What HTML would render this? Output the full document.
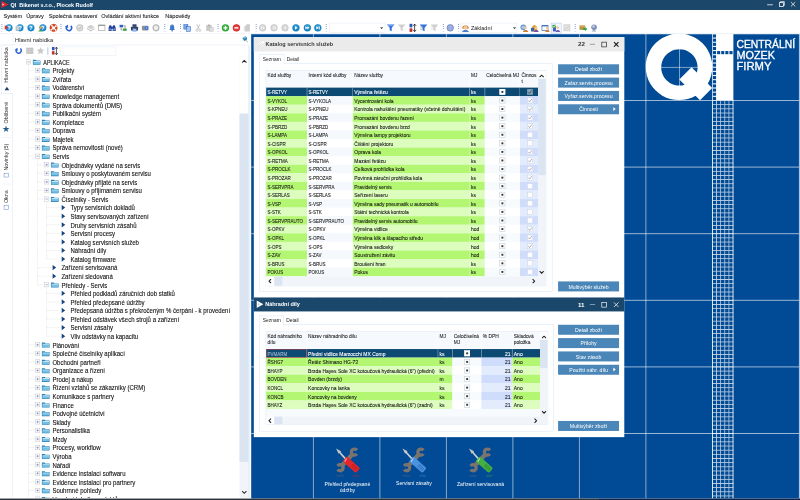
<!DOCTYPE html>
<html lang="cs"><head><meta charset="utf-8"><title>QI Bikenet s.r.o., Plocek Rudolf</title>
<style>
*{box-sizing:border-box;margin:0;padding:0}
html,body{width:800px;height:500px;overflow:hidden;background:#fff}
body{font-family:"Liberation Sans",sans-serif;color:#111}
#root{position:absolute;left:0;top:0;width:1680px;height:1050px;transform:scale(0.476190476);transform-origin:0 0;overflow:hidden;background:#fff;font-size:12px;filter:blur(.4px)}
.abs{position:absolute}
.t{position:absolute;white-space:nowrap;transform-origin:0 50%}
#titlebar{left:0;top:0;width:1680px;height:20.5px;background:#1b476a;z-index:2}
#titlebar .t{color:#fff;font-weight:bold;font-size:11.5px;line-height:20px}
#menubar{left:0;top:19px;width:1680px;height:26px;background:#fff}
#menubar .t{font-size:11.7px;line-height:28px;color:#1a1a1a;top:0;-webkit-text-stroke:.18px}
#toolbar{left:0;top:45px;width:1680px;height:26px;background:#fff;border-bottom:1px solid #d9e4f1}
#left{left:0;top:71px;width:527px;height:975px;background:#fff}
#mdi{left:527px;top:71px;width:1153px;height:975px;background:#014a95;overflow:hidden}
#status{left:0;top:1046.5px;width:1680px;height:4px;background:linear-gradient(90deg,#2b3138 0 1258px,#0b2148 1258px)}
.tree{font-size:13.6px;line-height:18px;color:#111;-webkit-text-stroke:.22px #111}
.win{position:absolute;background:#fff}
.btn{position:absolute;left:638px;width:128px;height:21px;background:#4a86b8;color:#fff;font-size:10.9px;line-height:22px;text-align:center;white-space:nowrap}
.cell{position:absolute;height:18px;overflow:hidden}
.g{-webkit-text-stroke:.2px;font-size:11.6px;line-height:18px;white-space:nowrap;position:absolute;left:3px;top:1px;transform-origin:0 50%;transform:scaleX(.9)}
.hdr{-webkit-text-stroke:.18px;position:absolute;font-size:11.6px;line-height:13px;color:#222;transform-origin:0 0;transform:scaleX(.875);white-space:nowrap}
</style></head>
<body><div id="root">
<div id="titlebar" class="abs">
<svg class="abs" style="left:2px;top:1px" width="17" height="17" viewBox="0 0 17 17"><path d="M1 1 L16 8.5 L1 16 Z" fill="#e3262b"/><path d="M3 6 l4 2.5 l-4 2.5z" fill="#fff" opacity=".8"/></svg>
<span class="t" style="left:22px;top:0px;white-space:pre">QI  Bikenet s.r.o., Plocek Rudolf</span>
<svg class="abs" style="left:1600px;top:0" width="80" height="19" viewBox="0 0 80 19"><g stroke="#fff" stroke-width="1.6" fill="none"><path d="M11 10h12"/><rect x="37" y="5.5" width="8" height="8"/><path d="M39 5.5v-2h8v8h-2"/><path d="M61 4.5l9 9M70 4.5l-9 9"/></g></svg>
</div>
<div id="menubar" class="abs">
<span class="t" style="left:7.4px;top:0px;">Systém</span>
<span class="t" style="left:55px;top:0px;">Úpravy</span>
<span class="t" style="left:102.4px;top:0px;">Společná nastavení</span>
<span class="t" style="left:212.6px;top:0px;">Ovládání aktivní funkce</span>
<span class="t" style="left:347px;top:0px;">Nápovědy</span>
</div>
<div id="toolbar" class="abs">
<div class="abs" style="left:3.0px;top:5px;width:2px;height:16px;background:repeating-linear-gradient(#7f9ccf 0 2px,#fff 2px 4px)"></div>
<svg class="abs" style="left:10.3px;top:5.4px" width="17" height="17" viewBox="0 0 16 16" overflow="visible"><circle cx="8.5" cy="8" r="7" fill="#1c86c8"/><circle cx="8.5" cy="6" r="4.6" fill="#55b4e6" opacity=".7"/><text x="8.5" y="12" font-size="10.5" font-weight="bold" fill="#fff" text-anchor="middle" font-family="Liberation Sans,sans-serif">?</text><path d="M0 3l7 4l-7 4.5z" fill="#e02b2b"/></svg>
<svg class="abs" style="left:33.4px;top:5.4px" width="17" height="17" viewBox="0 0 16 16" overflow="visible"><circle cx="8.5" cy="8" r="7" fill="#1c86c8"/><circle cx="8.5" cy="6" r="4.6" fill="#55b4e6" opacity=".7"/><text x="8.5" y="12" font-size="10.5" font-weight="bold" fill="#fff" text-anchor="middle" font-family="Liberation Sans,sans-serif">?</text><rect x="0" y="5" width="6" height="9" fill="#9aa3ad"/><rect x="1" y="4" width="6" height="9" fill="#c9d0d8"/></svg>
<svg class="abs" style="left:56.3px;top:5.4px" width="17" height="17" viewBox="0 0 16 16" overflow="visible"><circle cx="8.5" cy="8" r="7" fill="#1c86c8"/><circle cx="8.5" cy="6" r="4.6" fill="#55b4e6" opacity=".7"/><text x="8.5" y="12" font-size="10.5" font-weight="bold" fill="#fff" text-anchor="middle" font-family="Liberation Sans,sans-serif">?</text></svg>
<svg class="abs" style="left:80.6px;top:5.4px" width="17" height="17" viewBox="0 0 16 16" overflow="visible"><circle cx="8.5" cy="8" r="7" fill="#1c86c8"/><circle cx="8.5" cy="6" r="4.6" fill="#55b4e6" opacity=".7"/><text x="8.5" y="12" font-size="10.5" font-weight="bold" fill="#fff" text-anchor="middle" font-family="Liberation Sans,sans-serif">?</text><circle cx="3.5" cy="7.5" r="2.8" fill="#e8a25a"/><path d="M0 15c0-4 7-4 7 0z" fill="#4aa04a"/></svg>
<svg class="abs" style="left:103.9px;top:5.4px" width="17" height="17" viewBox="0 0 16 16" overflow="visible"><circle cx="8" cy="8" r="5.4" fill="none" stroke="#d9431f" stroke-width="4.2"/><circle cx="8" cy="8" r="5.4" fill="none" stroke="#fff" stroke-width="4.4" stroke-dasharray="2.8 5.68" stroke-dashoffset="-2.9"/><circle cx="8" cy="8" r="7.5" fill="none" stroke="#c23a1a" stroke-width=".6"/></svg>
<div class="abs" style="left:127.1px;top:5px;width:2px;height:16px;background:repeating-linear-gradient(#7f9ccf 0 2px,#fff 2px 4px)"></div>
<svg class="abs" style="left:135.8px;top:5.4px" width="17" height="17" viewBox="0 0 16 16" overflow="visible"><g transform="translate(8 8) scale(.88) translate(-8 -8)"><path d="M12.4 3.6A6 6 0 1 1 3 5.4" fill="none" stroke="#2a62d8" stroke-width="3.4"/><path d="M-.6 5.2l6.6-4.4l.6 7.4z" fill="#2a62d8"/></g></svg>
<svg class="abs" style="left:159.0px;top:5.4px" width="17" height="17" viewBox="0 0 16 16" overflow="visible"><circle cx="8" cy="8" r="7" fill="#c2c2c2"/><circle cx="8" cy="8" r="5" fill="#e4e4e4"/><path d="M5 8l2.2 2.4l4-4.6" fill="none" stroke="#b0b0b0" stroke-width="1.8"/></svg>
<svg class="abs" style="left:182.1px;top:5.4px" width="17" height="17" viewBox="0 0 16 16" overflow="visible"><path d="M8 2l7.5 4.5L8 11L.5 6.5z" fill="#cfcfcf"/><path d="M.5 8.5L8 13l7.5-4.5v2L8 15L.5 10.5z" fill="#b9b9b9"/></svg>
<svg class="abs" style="left:205.2px;top:5.4px" width="17" height="17" viewBox="0 0 16 16" overflow="visible"><rect x="1.5" y="2.5" width="13" height="11" fill="#fff" stroke="#a9a9a9" stroke-width="1.4"/><path d="M1.5 3h13" stroke="#8f8f8f" stroke-width="2"/></svg>
<svg class="abs" style="left:227.2px;top:5.4px" width="17" height="17" viewBox="0 0 16 16" overflow="visible"><path d="M1 14V8l2-5h3l1 3h2l1-3h3l2 5v6h-6v-4h-2v4z" fill="#1f3f9a"/><circle cx="4" cy="11" r="2" fill="#6f8fe0"/><circle cx="12" cy="11" r="2" fill="#6f8fe0"/></svg>
<svg class="abs" style="left:250.3px;top:5.4px" width="17" height="17" viewBox="0 0 16 16" overflow="visible"><rect x="1" y="2" width="7" height="5" fill="#2f5fc0"/><rect x="8" y="9" width="7" height="5" fill="#3f9f4f"/><path d="M4 8v4h3M12 8V4H9" fill="none" stroke="#555" stroke-width="1.2"/></svg>
<svg class="abs" style="left:274.2px;top:5.4px" width="17" height="17" viewBox="0 0 16 16" overflow="visible"><rect x="4" y="1" width="8" height="5" fill="#2a3d6e"/><rect x="1" y="6" width="14" height="7" rx="1" fill="#39425a"/><rect x="4" y="9" width="8" height="6" fill="#4d86e0"/><rect x="5" y="11" width="6" height="2" fill="#dfeaff"/></svg>
<svg class="abs" style="left:296.5px;top:5.4px" width="17" height="17" viewBox="0 0 16 16" overflow="visible"><rect x="1" y="4" width="13" height="9" rx="1.5" fill="#8d9199"/><circle cx="10" cy="8.5" r="3.6" fill="#2f6fe0"/><circle cx="10" cy="8.5" r="1.6" fill="#9cc2ff"/></svg>
<svg class="abs" style="left:319.4px;top:5.4px" width="17" height="17" viewBox="0 0 16 16" overflow="visible"><circle cx="8" cy="8" r="5.8" fill="#efefef" stroke="#b5b5b5" stroke-width="2.4"/></svg>
<div class="abs" style="left:345.1px;top:5px;width:2px;height:16px;background:repeating-linear-gradient(#7f9ccf 0 2px,#fff 2px 4px)"></div>
<svg class="abs" style="left:353.2px;top:5.4px" width="17" height="17" viewBox="0 0 16 16" overflow="visible"><path d="M8 1.5c3 0 4 2.5 4 5.5v3l1.6 2.2H2.4L4 10V7c0-3 1-5.5 4-5.5z" fill="#3f78c8"/><circle cx="8" cy="13.6" r="1.5" fill="#2a56a0"/><path d="M6 4c.5-1 1.5-1.5 2.5-1.5" stroke="#9cc2ff" stroke-width="1" fill="none"/></svg>
<div class="abs" style="left:377.6px;top:5px;width:2px;height:16px;background:repeating-linear-gradient(#7f9ccf 0 2px,#fff 2px 4px)"></div>
<svg class="abs" style="left:385.3px;top:5.4px" width="17" height="17" viewBox="0 0 16 16" overflow="visible"><rect x="1" y="1.5" width="8" height="9" fill="#7aa7e6" stroke="#2f5fc0" stroke-width="1"/><rect x="6.5" y="5.5" width="8" height="9.5" fill="#a9c8f4" stroke="#2f5fc0" stroke-width="1"/></svg>
<svg class="abs" style="left:407.8px;top:5.4px" width="17" height="17" viewBox="0 0 16 16" overflow="visible"><path d="M5 1l5 10M11 1L6 11" stroke="#b9b9b9" stroke-width="1.6"/><circle cx="5" cy="13" r="2" fill="none" stroke="#b9b9b9" stroke-width="1.4"/><circle cx="11" cy="13" r="2" fill="none" stroke="#b9b9b9" stroke-width="1.4"/></svg>
<svg class="abs" style="left:432.0px;top:5.4px" width="17" height="17" viewBox="0 0 16 16" overflow="visible"><rect x="1" y="3" width="11" height="11" fill="#c9c9c9"/><rect x="4" y="1.5" width="5" height="3" fill="#aaa"/><rect x="7" y="7" width="8" height="8" fill="#dedede" stroke="#bdbdbd" stroke-width=".8"/></svg>
<div class="abs" style="left:456.8px;top:5px;width:2px;height:16px;background:repeating-linear-gradient(#7f9ccf 0 2px,#fff 2px 4px)"></div>
<svg class="abs" style="left:465.1px;top:5.4px" width="17" height="17" viewBox="0 0 16 16" overflow="visible"><circle cx="8" cy="8" r="7.3" fill="#2aa332"/><circle cx="8" cy="8" r="6" fill="#3fc048" opacity=".6"/><path d="M4 8h8M8 4v8" stroke="#fff" stroke-width="2.6"/></svg>
<svg class="abs" style="left:487.6px;top:5.4px" width="17" height="17" viewBox="0 0 16 16" overflow="visible"><circle cx="8" cy="8" r="7.3" fill="#d4242a"/><circle cx="8" cy="8" r="6" fill="#ee4a4a" opacity=".6"/><path d="M4 8h8" stroke="#fff" stroke-width="2.8"/></svg>
<svg class="abs" style="left:510.7px;top:5.4px" width="17" height="17" viewBox="0 0 16 16" overflow="visible"><path d="M3 15V5l4-4h6v14z" fill="#cdcdcd"/><path d="M1 13V7l3-3v9z" fill="#dcdcdc"/></svg>
<div class="abs" style="left:537.0px;top:5px;width:2px;height:16px;background:repeating-linear-gradient(#7f9ccf 0 2px,#fff 2px 4px)"></div>
<svg class="abs" style="left:543.2px;top:5.4px" width="17" height="17" viewBox="0 0 16 16" overflow="visible"><circle cx="8" cy="8" r="7" fill="#c4c4c4"/><circle cx="8" cy="8" r="5.5" fill="#dadada"/><path d="M11 5L7.5 8L11 11zM5 5h1.6v6H5z" fill="#f4f4f4"/></svg>
<svg class="abs" style="left:566.6px;top:5.4px" width="17" height="17" viewBox="0 0 16 16" overflow="visible"><circle cx="8" cy="8" r="7" fill="#c4c4c4"/><circle cx="8" cy="8" r="5.5" fill="#dadada"/><path d="M8.5 5L5.5 8l3 3zM12 5L9 8l3 3z" fill="#f4f4f4"/></svg>
<svg class="abs" style="left:589.7px;top:5.4px" width="17" height="17" viewBox="0 0 16 16" overflow="visible"><circle cx="8" cy="8" r="7" fill="#c4c4c4"/><circle cx="8" cy="8" r="5.5" fill="#dadada"/><path d="M10 5L6.5 8L10 11z" fill="#f4f4f4"/></svg>
<svg class="abs" style="left:613.4px;top:5.4px" width="17" height="17" viewBox="0 0 16 16" overflow="visible"><circle cx="8" cy="8" r="7.2" fill="#1580bd"/><circle cx="8" cy="6.5" r="5" fill="#3aa6de" opacity=".7"/><path d="M6.2 4.5L10.8 8L6.2 11.5z" fill="#fff"/></svg>
<svg class="abs" style="left:636.5px;top:5.4px" width="17" height="17" viewBox="0 0 16 16" overflow="visible"><circle cx="8" cy="8" r="7.2" fill="#1580bd"/><circle cx="8" cy="6.5" r="5" fill="#3aa6de" opacity=".7"/><path d="M4 4.8L8 8l-4 3.2zM8 4.8L12 8l-4 3.2z" fill="#fff"/></svg>
<svg class="abs" style="left:659.4px;top:5.4px" width="17" height="17" viewBox="0 0 16 16" overflow="visible"><circle cx="8" cy="8" r="7.2" fill="#1580bd"/><circle cx="8" cy="6.5" r="5" fill="#3aa6de" opacity=".7"/><path d="M5 4.8L9.5 8L5 11.2zM9.8 4.8h1.8v6.4H9.8z" fill="#fff"/></svg>
<div class="abs" style="left:684.4px;top:5px;width:2px;height:16px;background:repeating-linear-gradient(#7f9ccf 0 2px,#fff 2px 4px)"></div>
<svg class="abs" style="left:811.8px;top:5.4px" width="17" height="17" viewBox="0 0 16 16" overflow="visible"><path d="M.5 1.5h15L10 8v6.5l-4-2V8z" fill="#2f6fe0"/><path d="M2.5 2.5h11l-1 1.2h-9z" fill="#8db6ff"/></svg>
<svg class="abs" style="left:834.7px;top:5.4px" width="17" height="17" viewBox="0 0 16 16" overflow="visible"><path d="M.5 1.5h15L10 8v6.5l-4-2V8z" fill="#cfcfcf"/></svg>
<svg class="abs" style="left:858.7px;top:5.4px" width="17" height="17" viewBox="0 0 16 16" overflow="visible"><rect x="1" y="0" width="5.5" height="7" fill="#2a56c0"/><rect x="1" y="9" width="5.5" height="7" fill="#c0302a"/><path d="M11 .5v15M8 4l3-3.5L14 4M8 12l3 3.5l3-3.5" fill="none" stroke="#222" stroke-width="1.6"/></svg>
<svg class="abs" style="left:881.4px;top:5.4px" width="17" height="17" viewBox="0 0 16 16" overflow="visible"><path d="M.5 1.5h15L10 8v6.5l-4-2V8z" fill="#2f6fe0"/><path d="M1 5h6M1 8h5M1 11h5" stroke="#9aa" stroke-width="1.2"/></svg>
<svg class="abs" style="left:904.0px;top:5.4px" width="17" height="17" viewBox="0 0 16 16" overflow="visible"><path d="M.5 1.5h15L10 8v6.5l-4-2V8z" fill="#cfcfcf"/><path d="M1 5h6M1 8h5M1 11h5" stroke="#d5d5d5" stroke-width="1.2"/></svg>
<div class="abs" style="left:929.9px;top:5px;width:2px;height:16px;background:repeating-linear-gradient(#7f9ccf 0 2px,#fff 2px 4px)"></div>
<svg class="abs" style="left:937.2px;top:5.4px" width="17" height="17" viewBox="0 0 16 16" overflow="visible"><circle cx="8" cy="8" r="7" fill="#6d83c0"/><circle cx="8" cy="8" r="5.5" fill="#8ea3d8"/><path d="M1 8h14M8 1v14M3 4c3 2 7 2 10 0M3 12c3-2 7-2 10 0" stroke="#b9c8ee" stroke-width=".8" fill="none"/></svg>
<div class="abs" style="left:962.3px;top:5px;width:2px;height:16px;background:repeating-linear-gradient(#7f9ccf 0 2px,#fff 2px 4px)"></div>
<svg class="abs" style="left:1091.6px;top:5.4px" width="17" height="17" viewBox="0 0 16 16" overflow="visible"><circle cx="6.5" cy="7" r="5.5" fill="#5d8fd0"/><circle cx="6.5" cy="7" r="3.5" fill="#a9c8f0"/><circle cx="11" cy="8" r="2.8" fill="#f0c8a0"/><path d="M6 16c0-5 10-5 10 0z" fill="#c8803a"/></svg>
<svg class="abs" style="left:1113.6px;top:5.4px" width="17" height="17" viewBox="0 0 16 16" overflow="visible"><path d="M3 6l5-4l5 4v9H3z" fill="#d8a030"/><rect x="1" y="8" width="6" height="7" fill="#3f5fc0"/><circle cx="11" cy="8" r="2.8" fill="#f0c8a0"/><path d="M7 16c0-5 9-5 9 0z" fill="#8050a0"/></svg>
<svg class="abs" style="left:1136.5px;top:5.4px" width="17" height="17" viewBox="0 0 16 16" overflow="visible"><rect x="1" y="3" width="12" height="10" fill="#fff" stroke="#3f6fc0" stroke-width="1.4"/><path d="M1 4h12" stroke="#3f6fc0" stroke-width="2.4"/><circle cx="11.5" cy="8.5" r="2.6" fill="#f0c8a0"/><path d="M7.5 16c0-5 8.5-5 8.5 0z" fill="#c8803a"/></svg>
<svg class="abs" style="left:1159.2px;top:5.4px" width="17" height="17" viewBox="0 0 16 16" overflow="visible"><rect x="1" y="2" width="7" height="6" fill="#3fa04a"/><rect x="2" y="8" width="6" height="7" fill="#3f5fc0"/><path d="M2 4.5l2 2l3.5-4" stroke="#fff" stroke-width="1.3" fill="none"/><circle cx="11.5" cy="7.5" r="2.8" fill="#f0c8a0"/><path d="M7.5 16c0-5 8.5-5 8.5 0z" fill="#7060b0"/></svg>
<svg class="abs" style="left:1182.1px;top:5.4px" width="17" height="17" viewBox="0 0 16 16" overflow="visible"><rect x="2" y="2" width="12" height="12" fill="#e2e2e2" stroke="#c4c4c4" stroke-width="1.2"/><path d="M5 11l6-6" stroke="#c9c9c9" stroke-width="1.6"/></svg>
<div class="abs" style="left:1206.7px;top:5px;width:2px;height:16px;background:repeating-linear-gradient(#7f9ccf 0 2px,#fff 2px 4px)"></div>
<svg class="abs" style="left:1216.3px;top:5.4px" width="17" height="17" viewBox="0 0 16 16" overflow="visible"><rect x="1" y="4" width="11" height="8" fill="#b8944a"/><rect x="1" y="2.5" width="11" height="3" fill="#d8b870"/><path d="M8 9h4V6.5l4 4l-4 4V12H8z" fill="#2fa83a"/></svg>
<svg class="abs" style="left:1239.4px;top:5.4px" width="17" height="17" viewBox="0 0 16 16" overflow="visible"><circle cx="8" cy="7" r="5.5" fill="#7d8fb8"/><circle cx="7" cy="5.5" r="2.5" fill="#c4cfea"/><path d="M4 15h8l-1.5-2.5h-5z" fill="#9aa3ad"/></svg>
<div class="abs" style="left:690.5px;top:3px;width:118px;height:21px;border:1px solid #dfe8f3;background:#fff"></div>
<svg class="abs" style="left:798px;top:12px" width="8" height="5"><path d="M0 0h7l-3.5 4z" fill="#222"/></svg>
<div class="abs" style="left:967px;top:3px;width:119px;height:21px;border:1px solid #dfe8f3;background:#fff"></div>
<svg class="abs" style="left:969.3px;top:5.4px" width="17" height="17" viewBox="0 0 16 16" overflow="visible"><path d="M2 7c0-5 12-5 12 0v3H2z" fill="#c8803a"/><circle cx="8" cy="8" r="4" fill="#f0c8a0"/><path d="M1.5 16c0-5 13-5 13 0z" fill="#4a7fd0"/></svg>
<span class="t" style="left:989px;top:0px;font-size:11.5px;line-height:27px;color:#222">Základní</span>
<svg class="abs" style="left:1076.5px;top:12px" width="8" height="5"><path d="M0 0h7l-3.5 4z" fill="#222"/></svg>
<div class="abs" style="left:1156.5px;top:2.5px;width:22px;height:22px;border:1px solid #a9c6ea;background:#f3f8fe"></div>
<svg class="abs" style="left:1159.2px;top:5.4px" width="17" height="17" viewBox="0 0 16 16" overflow="visible"><rect x="1" y="2" width="7" height="6" fill="#3fa04a"/><rect x="2" y="8" width="6" height="7" fill="#3f5fc0"/><path d="M2 4.5l2 2l3.5-4" stroke="#fff" stroke-width="1.3" fill="none"/><circle cx="11.5" cy="7.5" r="2.8" fill="#f0c8a0"/><path d="M7.5 16c0-5 8.5-5 8.5 0z" fill="#7060b0"/></svg>
</div>
<div id="left" class="abs">
<div class="abs" style="left:27px;top:0;width:500px;height:24px;background:#fff;border-left:1px solid #e3ebf5"></div>
<span class="t" style="left:31.5px;top:0px;font-size:12px;line-height:26px;color:#222">Hlavní nabídka</span>
<svg class="abs" style="left:506px;top:3px" width="16" height="16" viewBox="0 0 16 16"><path d="M3 6.5l6-4.5l4 3l-1 5l-5 2z" fill="#2f7fb0"/><path d="M4 6l5-3.5l3.5 2.5l-4.5 2z" fill="#8cc8e8"/><path d="M10.5 11l4 3.5" stroke="#9aa3ad" stroke-width="1.8"/></svg>
<div class="abs" style="left:0;top:22.5px;width:523px;height:1px;background:#dbe6f4"></div>
<div class="abs" style="left:0;top:24px;width:27px;height:951px;background:#fff;border-right:1px solid #d9e4f1"></div>
<div class="abs" style="left:2px;top:22.5px;width:26px;height:103px;background:#fff;border:1px solid #d9e4f1;border-right:1px solid #fff"></div>
<div class="abs" style="left:12.8px;top:73.5px;width:0;height:0"><div style="position:absolute;white-space:nowrap;transform:translate(-50%,-50%) rotate(-90deg);font-size:11.2px;color:#333;line-height:14px"><span style="display:inline-block;width:0;height:0;border-left:5px solid transparent;border-right:5px solid transparent;border-bottom:7px solid #1c3f6e;transform:rotate(90deg);margin-right:7px;vertical-align:-1px"></span>Hlavní nabídka</div></div>
<div class="abs" style="left:12.8px;top:174.5px;width:0;height:0"><div style="position:absolute;white-space:nowrap;transform:translate(-50%,-50%) rotate(-90deg);font-size:11.2px;color:#333;line-height:14px"><span style="color:#1f5c8c;font-size:18px;margin-right:3px;vertical-align:-1px;display:inline-block;transform:rotate(90deg)">★</span>Oblíbené</div></div>
<div class="abs" style="left:12.8px;top:265.5px;width:0;height:0"><div style="position:absolute;white-space:nowrap;transform:translate(-50%,-50%) rotate(-90deg);font-size:11.2px;color:#333;line-height:14px"><span style="display:inline-block;width:9px;height:10px;border:1.5px solid #5a7fc8;margin-right:5px;vertical-align:-1px"></span>Novinky (5)</div></div>
<div class="abs" style="left:12.8px;top:348.5px;width:0;height:0"><div style="position:absolute;white-space:nowrap;transform:translate(-50%,-50%) rotate(-90deg);font-size:11.2px;color:#333;line-height:14px"><span style="display:inline-block;width:9px;height:10px;border:1.5px solid #5a7fc8;margin-right:5px;vertical-align:-1px"></span>Okna</div></div>
<div class="abs" style="left:4px;top:217px;width:20px;height:1px;background:#e1e9f4"></div>
<div class="abs" style="left:4px;top:315px;width:20px;height:1px;background:#e1e9f4"></div>
<svg class="abs" style="left:28px;top:24px" width="110" height="24" viewBox="0 0 110 24"><g transform="translate(10.5 12) scale(.86) translate(-9.5 -12)"><path d="M14.5 6.2 A6.3 6.3 0 1 1 4.6 8.5" fill="none" stroke="#2a62d8" stroke-width="3.4"/><path d="M1 8.6 l6.6 -4.4 l0.6 7.4z" fill="#2a62d8"/></g><rect x="27" y="5" width="15" height="13" fill="#c4c4c4"/><path d="M27 9h15M27 13h15" stroke="#ddd" stroke-width="1"/><path d="M57 3.5l2.4 5.3 5.6.6-4.2 3.9 1.2 5.7-5-3-5 3 1.2-5.7-4.2-3.9 5.6-.6z" fill="#c9c9c9"/><rect x="71.5" y="4" width="2" height="16" fill="#a9c3ea"/><rect x="81" y="3.5" width="5.5" height="7" fill="#2a56c0"/><rect x="81" y="12.5" width="5.5" height="7" fill="#c0302a"/><path d="M90.5 4v16M87.5 7.5l3 -3.5l3 3.5M87.5 16.5l3 3.5l3 -3.5" fill="none" stroke="#222" stroke-width="1.6"/></svg>
<div class="abs" style="left:127px;top:26.5px;width:117px;height:19px;border:1px solid #dfe8f3;background:#fff"></div>
<div class="abs tree" style="left:0;top:0;width:503px;height:975px;overflow:hidden">
<span class="t" style="left:91px;top:52.2px;transform:scaleX(0.83)">APLIKACE</span>
<span class="t" style="left:110px;top:70.2px;transform:scaleX(0.932)">Projekty</span>
<span class="t" style="left:110px;top:88.2px;transform:scaleX(0.932)">Zvířata</span>
<span class="t" style="left:110px;top:106.2px;transform:scaleX(0.932)">Vodárenství</span>
<span class="t" style="left:110px;top:124.2px;transform:scaleX(0.932)">Knowledge management</span>
<span class="t" style="left:110px;top:142.2px;transform:scaleX(0.932)">Správa dokumentů (DMS)</span>
<span class="t" style="left:110px;top:160.2px;transform:scaleX(0.932)">Publikační systém</span>
<span class="t" style="left:110px;top:178.2px;transform:scaleX(0.932)">Kompletace</span>
<span class="t" style="left:110px;top:196.2px;transform:scaleX(0.932)">Doprava</span>
<span class="t" style="left:110px;top:214.2px;transform:scaleX(0.932)">Majetek</span>
<span class="t" style="left:110px;top:232.2px;transform:scaleX(0.932)">Správa nemovitostí (nové)</span>
<span class="t" style="left:110px;top:250.2px;transform:scaleX(0.932)">Servis</span>
<span class="t" style="left:129px;top:268.2px;transform:scaleX(0.932)">Objednávky vydané na servis</span>
<span class="t" style="left:129px;top:286.2px;transform:scaleX(0.932)">Smlouvy o poskytovaném servisu</span>
<span class="t" style="left:129px;top:304.2px;transform:scaleX(0.932)">Objednávky přijaté na servis</span>
<span class="t" style="left:129px;top:322.2px;transform:scaleX(0.932)">Smlouvy o přijímaném servisu</span>
<span class="t" style="left:129px;top:340.2px;transform:scaleX(0.932)">Číselníky - Servis</span>
<span class="t" style="left:148px;top:358.2px;transform:scaleX(0.932)">Typy servisních dokladů</span>
<span class="t" style="left:148px;top:376.2px;transform:scaleX(0.932)">Stavy servisovaných zařízení</span>
<span class="t" style="left:148px;top:394.2px;transform:scaleX(0.932)">Druhy servisních zásahů</span>
<span class="t" style="left:148px;top:412.2px;transform:scaleX(0.932)">Servisní procesy</span>
<span class="t" style="left:148px;top:430.2px;transform:scaleX(0.932)">Katalog servisních služeb</span>
<span class="t" style="left:148px;top:448.2px;transform:scaleX(0.932)">Náhradní díly</span>
<span class="t" style="left:148px;top:466.2px;transform:scaleX(0.932)">Katalog firmware</span>
<span class="t" style="left:129px;top:484.2px;transform:scaleX(0.932)">Zařízení servisovaná</span>
<span class="t" style="left:129px;top:502.2px;transform:scaleX(0.932)">Zařízení sledovaná</span>
<span class="t" style="left:129px;top:520.2px;transform:scaleX(0.932)">Přehledy - Servis</span>
<span class="t" style="left:148px;top:538.2px;transform:scaleX(0.932)">Přehled podkladů záručních dob statků</span>
<span class="t" style="left:148px;top:556.2px;transform:scaleX(0.932)">Přehled předepsané údržby</span>
<span class="t" style="left:148px;top:574.2px;transform:scaleX(0.932)">Předepsaná údržba s překročeným % čerpání - k provedení</span>
<span class="t" style="left:148px;top:592.2px;transform:scaleX(0.932)">Přehled odstávek všech strojů a zařízení</span>
<span class="t" style="left:148px;top:610.2px;transform:scaleX(0.932)">Servisní zásahy</span>
<span class="t" style="left:148px;top:628.2px;transform:scaleX(0.932)">Vliv odstávky na kapacitu</span>
<span class="t" style="left:110px;top:646.2px;transform:scaleX(0.932)">Plánování</span>
<span class="t" style="left:110px;top:664.2px;transform:scaleX(0.932)">Společné číselníky aplikací</span>
<span class="t" style="left:110px;top:682.2px;transform:scaleX(0.932)">Obchodní partneři</span>
<span class="t" style="left:110px;top:700.2px;transform:scaleX(0.932)">Organizace a řízení</span>
<span class="t" style="left:110px;top:718.2px;transform:scaleX(0.932)">Prodej a nákup</span>
<span class="t" style="left:110px;top:736.2px;transform:scaleX(0.932)">Řízení vztahů se zákazníky (CRM)</span>
<span class="t" style="left:110px;top:754.2px;transform:scaleX(0.932)">Komunikace s partnery</span>
<span class="t" style="left:110px;top:772.2px;transform:scaleX(0.932)">Finance</span>
<span class="t" style="left:110px;top:790.2px;transform:scaleX(0.932)">Podvojné účetnictví</span>
<span class="t" style="left:110px;top:808.2px;transform:scaleX(0.932)">Sklady</span>
<span class="t" style="left:110px;top:826.2px;transform:scaleX(0.932)">Personalistika</span>
<span class="t" style="left:110px;top:844.2px;transform:scaleX(0.932)">Mzdy</span>
<span class="t" style="left:110px;top:862.2px;transform:scaleX(0.932)">Procesy, workflow</span>
<span class="t" style="left:110px;top:880.2px;transform:scaleX(0.932)">Výroba</span>
<span class="t" style="left:110px;top:898.2px;transform:scaleX(0.932)">Nářadí</span>
<span class="t" style="left:110px;top:916.2px;transform:scaleX(0.932)">Evidence instalací softwaru</span>
<span class="t" style="left:110px;top:934.2px;transform:scaleX(0.932)">Evidence instalací pro partnery</span>
<span class="t" style="left:110px;top:952.2px;transform:scaleX(0.932)">Souhrnné pohledy</span>
<span class="t" style="left:110px;top:970.2px;transform:scaleX(0.932)">Vazební tabulky projektů</span>
<svg class="abs" style="left:0;top:0" width="503" height="975"><style>.d{stroke:#cdcdcd;stroke-width:1;stroke-dasharray:1 1;fill:none}</style><rect x="55.5" y="54.5" width="9" height="9" fill="#fff" stroke="#c2c2c2" stroke-width="1"/><path d="M57.5 59h5" stroke="#4a5fae" stroke-width="1"/><path d="M69 54.5h6l1.5 1.6h8.5v8.9h-16z" fill="#2a82b4"/><path d="M70 58.4h14v5.4h-14z" fill="#74c0e4"/><path d="M70.5 57h13.5v2h-13.5z" fill="#c4e6f6"/><path d="M60 77h14M84 77h4" class="d"/><rect x="74.5" y="72.5" width="9" height="9" fill="#fff" stroke="#c2c2c2" stroke-width="1"/><path d="M76.5 77h5" stroke="#4a5fae" stroke-width="1"/><path d="M79 74.5v5" stroke="#4a5fae" stroke-width="1"/><path d="M88 72.5h6l1.5 1.6h8.5v8.9h-16z" fill="#2a82b4"/><path d="M89 76.4h14v5.4h-14z" fill="#74c0e4"/><path d="M89.5 75h13.5v2h-13.5z" fill="#c4e6f6"/><path d="M60 95h14M84 95h4" class="d"/><rect x="74.5" y="90.5" width="9" height="9" fill="#fff" stroke="#c2c2c2" stroke-width="1"/><path d="M76.5 95h5" stroke="#4a5fae" stroke-width="1"/><path d="M79 92.5v5" stroke="#4a5fae" stroke-width="1"/><path d="M88 90.5h6l1.5 1.6h8.5v8.9h-16z" fill="#2a82b4"/><path d="M89 94.4h14v5.4h-14z" fill="#74c0e4"/><path d="M89.5 93h13.5v2h-13.5z" fill="#c4e6f6"/><path d="M60 113h14M84 113h4" class="d"/><rect x="74.5" y="108.5" width="9" height="9" fill="#fff" stroke="#c2c2c2" stroke-width="1"/><path d="M76.5 113h5" stroke="#4a5fae" stroke-width="1"/><path d="M79 110.5v5" stroke="#4a5fae" stroke-width="1"/><path d="M88 108.5h6l1.5 1.6h8.5v8.9h-16z" fill="#2a82b4"/><path d="M89 112.4h14v5.4h-14z" fill="#74c0e4"/><path d="M89.5 111h13.5v2h-13.5z" fill="#c4e6f6"/><path d="M60 131h14M84 131h4" class="d"/><rect x="74.5" y="126.5" width="9" height="9" fill="#fff" stroke="#c2c2c2" stroke-width="1"/><path d="M76.5 131h5" stroke="#4a5fae" stroke-width="1"/><path d="M79 128.5v5" stroke="#4a5fae" stroke-width="1"/><path d="M88 126.5h6l1.5 1.6h8.5v8.9h-16z" fill="#2a82b4"/><path d="M89 130.4h14v5.4h-14z" fill="#74c0e4"/><path d="M89.5 129h13.5v2h-13.5z" fill="#c4e6f6"/><path d="M60 149h14M84 149h4" class="d"/><rect x="74.5" y="144.5" width="9" height="9" fill="#fff" stroke="#c2c2c2" stroke-width="1"/><path d="M76.5 149h5" stroke="#4a5fae" stroke-width="1"/><path d="M79 146.5v5" stroke="#4a5fae" stroke-width="1"/><path d="M88 144.5h6l1.5 1.6h8.5v8.9h-16z" fill="#2a82b4"/><path d="M89 148.4h14v5.4h-14z" fill="#74c0e4"/><path d="M89.5 147h13.5v2h-13.5z" fill="#c4e6f6"/><path d="M60 167h14M84 167h4" class="d"/><rect x="74.5" y="162.5" width="9" height="9" fill="#fff" stroke="#c2c2c2" stroke-width="1"/><path d="M76.5 167h5" stroke="#4a5fae" stroke-width="1"/><path d="M79 164.5v5" stroke="#4a5fae" stroke-width="1"/><path d="M88 162.5h6l1.5 1.6h8.5v8.9h-16z" fill="#2a82b4"/><path d="M89 166.4h14v5.4h-14z" fill="#74c0e4"/><path d="M89.5 165h13.5v2h-13.5z" fill="#c4e6f6"/><path d="M60 185h14M84 185h4" class="d"/><rect x="74.5" y="180.5" width="9" height="9" fill="#fff" stroke="#c2c2c2" stroke-width="1"/><path d="M76.5 185h5" stroke="#4a5fae" stroke-width="1"/><path d="M79 182.5v5" stroke="#4a5fae" stroke-width="1"/><path d="M88 180.5h6l1.5 1.6h8.5v8.9h-16z" fill="#2a82b4"/><path d="M89 184.4h14v5.4h-14z" fill="#74c0e4"/><path d="M89.5 183h13.5v2h-13.5z" fill="#c4e6f6"/><path d="M60 203h14M84 203h4" class="d"/><rect x="74.5" y="198.5" width="9" height="9" fill="#fff" stroke="#c2c2c2" stroke-width="1"/><path d="M76.5 203h5" stroke="#4a5fae" stroke-width="1"/><path d="M79 200.5v5" stroke="#4a5fae" stroke-width="1"/><path d="M88 198.5h6l1.5 1.6h8.5v8.9h-16z" fill="#2a82b4"/><path d="M89 202.4h14v5.4h-14z" fill="#74c0e4"/><path d="M89.5 201h13.5v2h-13.5z" fill="#c4e6f6"/><path d="M60 221h14M84 221h4" class="d"/><rect x="74.5" y="216.5" width="9" height="9" fill="#fff" stroke="#c2c2c2" stroke-width="1"/><path d="M76.5 221h5" stroke="#4a5fae" stroke-width="1"/><path d="M79 218.5v5" stroke="#4a5fae" stroke-width="1"/><path d="M88 216.5h6l1.5 1.6h8.5v8.9h-16z" fill="#2a82b4"/><path d="M89 220.4h14v5.4h-14z" fill="#74c0e4"/><path d="M89.5 219h13.5v2h-13.5z" fill="#c4e6f6"/><path d="M60 239h14M84 239h4" class="d"/><rect x="74.5" y="234.5" width="9" height="9" fill="#fff" stroke="#c2c2c2" stroke-width="1"/><path d="M76.5 239h5" stroke="#4a5fae" stroke-width="1"/><path d="M79 236.5v5" stroke="#4a5fae" stroke-width="1"/><path d="M88 234.5h6l1.5 1.6h8.5v8.9h-16z" fill="#2a82b4"/><path d="M89 238.4h14v5.4h-14z" fill="#74c0e4"/><path d="M89.5 237h13.5v2h-13.5z" fill="#c4e6f6"/><path d="M60 257h14M84 257h4" class="d"/><rect x="74.5" y="252.5" width="9" height="9" fill="#fff" stroke="#c2c2c2" stroke-width="1"/><path d="M76.5 257h5" stroke="#4a5fae" stroke-width="1"/><path d="M88 252.5h6l1.5 1.6h8.5v8.9h-16z" fill="#2a82b4"/><path d="M89 256.4h14v5.4h-14z" fill="#74c0e4"/><path d="M89.5 255h13.5v2h-13.5z" fill="#c4e6f6"/><path d="M79 275h14M103 275h4" class="d"/><rect x="93.5" y="270.5" width="9" height="9" fill="#fff" stroke="#c2c2c2" stroke-width="1"/><path d="M95.5 275h5" stroke="#4a5fae" stroke-width="1"/><path d="M98 272.5v5" stroke="#4a5fae" stroke-width="1"/><path d="M107 270.5h6l1.5 1.6h8.5v8.9h-16z" fill="#2a82b4"/><path d="M108 274.4h14v5.4h-14z" fill="#74c0e4"/><path d="M108.5 273h13.5v2h-13.5z" fill="#c4e6f6"/><path d="M79 293h14M103 293h4" class="d"/><rect x="93.5" y="288.5" width="9" height="9" fill="#fff" stroke="#c2c2c2" stroke-width="1"/><path d="M95.5 293h5" stroke="#4a5fae" stroke-width="1"/><path d="M98 290.5v5" stroke="#4a5fae" stroke-width="1"/><path d="M107 288.5h6l1.5 1.6h8.5v8.9h-16z" fill="#2a82b4"/><path d="M108 292.4h14v5.4h-14z" fill="#74c0e4"/><path d="M108.5 291h13.5v2h-13.5z" fill="#c4e6f6"/><path d="M79 311h14M103 311h4" class="d"/><rect x="93.5" y="306.5" width="9" height="9" fill="#fff" stroke="#c2c2c2" stroke-width="1"/><path d="M95.5 311h5" stroke="#4a5fae" stroke-width="1"/><path d="M98 308.5v5" stroke="#4a5fae" stroke-width="1"/><path d="M107 306.5h6l1.5 1.6h8.5v8.9h-16z" fill="#2a82b4"/><path d="M108 310.4h14v5.4h-14z" fill="#74c0e4"/><path d="M108.5 309h13.5v2h-13.5z" fill="#c4e6f6"/><path d="M79 329h14M103 329h4" class="d"/><rect x="93.5" y="324.5" width="9" height="9" fill="#fff" stroke="#c2c2c2" stroke-width="1"/><path d="M95.5 329h5" stroke="#4a5fae" stroke-width="1"/><path d="M98 326.5v5" stroke="#4a5fae" stroke-width="1"/><path d="M107 324.5h6l1.5 1.6h8.5v8.9h-16z" fill="#2a82b4"/><path d="M108 328.4h14v5.4h-14z" fill="#74c0e4"/><path d="M108.5 327h13.5v2h-13.5z" fill="#c4e6f6"/><path d="M79 347h14M103 347h4" class="d"/><rect x="93.5" y="342.5" width="9" height="9" fill="#fff" stroke="#c2c2c2" stroke-width="1"/><path d="M95.5 347h5" stroke="#4a5fae" stroke-width="1"/><path d="M107 342.5h6l1.5 1.6h8.5v8.9h-16z" fill="#2a82b4"/><path d="M108 346.4h14v5.4h-14z" fill="#74c0e4"/><path d="M108.5 345h13.5v2h-13.5z" fill="#c4e6f6"/><path d="M98 365h30" class="d"/><path d="M129.5 359.5l7.5 5.5l-7.5 5.5z" fill="#17467f"/><path d="M98 383h30" class="d"/><path d="M129.5 377.5l7.5 5.5l-7.5 5.5z" fill="#17467f"/><path d="M98 401h30" class="d"/><path d="M129.5 395.5l7.5 5.5l-7.5 5.5z" fill="#17467f"/><path d="M98 419h30" class="d"/><path d="M129.5 413.5l7.5 5.5l-7.5 5.5z" fill="#17467f"/><path d="M98 437h30" class="d"/><path d="M129.5 431.5l7.5 5.5l-7.5 5.5z" fill="#17467f"/><path d="M98 455h30" class="d"/><path d="M129.5 449.5l7.5 5.5l-7.5 5.5z" fill="#17467f"/><path d="M98 473h30" class="d"/><path d="M129.5 467.5l7.5 5.5l-7.5 5.5z" fill="#17467f"/><path d="M79 491h30" class="d"/><path d="M110.5 485.5l7.5 5.5l-7.5 5.5z" fill="#17467f"/><path d="M79 509h30" class="d"/><path d="M110.5 503.5l7.5 5.5l-7.5 5.5z" fill="#17467f"/><path d="M79 527h14M103 527h4" class="d"/><rect x="93.5" y="522.5" width="9" height="9" fill="#fff" stroke="#c2c2c2" stroke-width="1"/><path d="M95.5 527h5" stroke="#4a5fae" stroke-width="1"/><path d="M107 522.5h6l1.5 1.6h8.5v8.9h-16z" fill="#2a82b4"/><path d="M108 526.4h14v5.4h-14z" fill="#74c0e4"/><path d="M108.5 525h13.5v2h-13.5z" fill="#c4e6f6"/><path d="M98 545h30" class="d"/><path d="M129.5 539.5l7.5 5.5l-7.5 5.5z" fill="#17467f"/><path d="M98 563h30" class="d"/><path d="M129.5 557.5l7.5 5.5l-7.5 5.5z" fill="#17467f"/><path d="M98 581h30" class="d"/><path d="M129.5 575.5l7.5 5.5l-7.5 5.5z" fill="#17467f"/><path d="M98 599h30" class="d"/><path d="M129.5 593.5l7.5 5.5l-7.5 5.5z" fill="#17467f"/><path d="M98 617h30" class="d"/><path d="M129.5 611.5l7.5 5.5l-7.5 5.5z" fill="#17467f"/><path d="M98 635h30" class="d"/><path d="M129.5 629.5l7.5 5.5l-7.5 5.5z" fill="#17467f"/><path d="M60 653h14M84 653h4" class="d"/><rect x="74.5" y="648.5" width="9" height="9" fill="#fff" stroke="#c2c2c2" stroke-width="1"/><path d="M76.5 653h5" stroke="#4a5fae" stroke-width="1"/><path d="M79 650.5v5" stroke="#4a5fae" stroke-width="1"/><path d="M88 648.5h6l1.5 1.6h8.5v8.9h-16z" fill="#2a82b4"/><path d="M89 652.4h14v5.4h-14z" fill="#74c0e4"/><path d="M89.5 651h13.5v2h-13.5z" fill="#c4e6f6"/><path d="M60 671h14M84 671h4" class="d"/><rect x="74.5" y="666.5" width="9" height="9" fill="#fff" stroke="#c2c2c2" stroke-width="1"/><path d="M76.5 671h5" stroke="#4a5fae" stroke-width="1"/><path d="M79 668.5v5" stroke="#4a5fae" stroke-width="1"/><path d="M88 666.5h6l1.5 1.6h8.5v8.9h-16z" fill="#2a82b4"/><path d="M89 670.4h14v5.4h-14z" fill="#74c0e4"/><path d="M89.5 669h13.5v2h-13.5z" fill="#c4e6f6"/><path d="M60 689h14M84 689h4" class="d"/><rect x="74.5" y="684.5" width="9" height="9" fill="#fff" stroke="#c2c2c2" stroke-width="1"/><path d="M76.5 689h5" stroke="#4a5fae" stroke-width="1"/><path d="M79 686.5v5" stroke="#4a5fae" stroke-width="1"/><path d="M88 684.5h6l1.5 1.6h8.5v8.9h-16z" fill="#2a82b4"/><path d="M89 688.4h14v5.4h-14z" fill="#74c0e4"/><path d="M89.5 687h13.5v2h-13.5z" fill="#c4e6f6"/><path d="M60 707h14M84 707h4" class="d"/><rect x="74.5" y="702.5" width="9" height="9" fill="#fff" stroke="#c2c2c2" stroke-width="1"/><path d="M76.5 707h5" stroke="#4a5fae" stroke-width="1"/><path d="M79 704.5v5" stroke="#4a5fae" stroke-width="1"/><path d="M88 702.5h6l1.5 1.6h8.5v8.9h-16z" fill="#2a82b4"/><path d="M89 706.4h14v5.4h-14z" fill="#74c0e4"/><path d="M89.5 705h13.5v2h-13.5z" fill="#c4e6f6"/><path d="M60 725h14M84 725h4" class="d"/><rect x="74.5" y="720.5" width="9" height="9" fill="#fff" stroke="#c2c2c2" stroke-width="1"/><path d="M76.5 725h5" stroke="#4a5fae" stroke-width="1"/><path d="M79 722.5v5" stroke="#4a5fae" stroke-width="1"/><path d="M88 720.5h6l1.5 1.6h8.5v8.9h-16z" fill="#2a82b4"/><path d="M89 724.4h14v5.4h-14z" fill="#74c0e4"/><path d="M89.5 723h13.5v2h-13.5z" fill="#c4e6f6"/><path d="M60 743h14M84 743h4" class="d"/><rect x="74.5" y="738.5" width="9" height="9" fill="#fff" stroke="#c2c2c2" stroke-width="1"/><path d="M76.5 743h5" stroke="#4a5fae" stroke-width="1"/><path d="M79 740.5v5" stroke="#4a5fae" stroke-width="1"/><path d="M88 738.5h6l1.5 1.6h8.5v8.9h-16z" fill="#2a82b4"/><path d="M89 742.4h14v5.4h-14z" fill="#74c0e4"/><path d="M89.5 741h13.5v2h-13.5z" fill="#c4e6f6"/><path d="M60 761h14M84 761h4" class="d"/><rect x="74.5" y="756.5" width="9" height="9" fill="#fff" stroke="#c2c2c2" stroke-width="1"/><path d="M76.5 761h5" stroke="#4a5fae" stroke-width="1"/><path d="M79 758.5v5" stroke="#4a5fae" stroke-width="1"/><path d="M88 756.5h6l1.5 1.6h8.5v8.9h-16z" fill="#2a82b4"/><path d="M89 760.4h14v5.4h-14z" fill="#74c0e4"/><path d="M89.5 759h13.5v2h-13.5z" fill="#c4e6f6"/><path d="M60 779h14M84 779h4" class="d"/><rect x="74.5" y="774.5" width="9" height="9" fill="#fff" stroke="#c2c2c2" stroke-width="1"/><path d="M76.5 779h5" stroke="#4a5fae" stroke-width="1"/><path d="M79 776.5v5" stroke="#4a5fae" stroke-width="1"/><path d="M88 774.5h6l1.5 1.6h8.5v8.9h-16z" fill="#2a82b4"/><path d="M89 778.4h14v5.4h-14z" fill="#74c0e4"/><path d="M89.5 777h13.5v2h-13.5z" fill="#c4e6f6"/><path d="M60 797h14M84 797h4" class="d"/><rect x="74.5" y="792.5" width="9" height="9" fill="#fff" stroke="#c2c2c2" stroke-width="1"/><path d="M76.5 797h5" stroke="#4a5fae" stroke-width="1"/><path d="M79 794.5v5" stroke="#4a5fae" stroke-width="1"/><path d="M88 792.5h6l1.5 1.6h8.5v8.9h-16z" fill="#2a82b4"/><path d="M89 796.4h14v5.4h-14z" fill="#74c0e4"/><path d="M89.5 795h13.5v2h-13.5z" fill="#c4e6f6"/><path d="M60 815h14M84 815h4" class="d"/><rect x="74.5" y="810.5" width="9" height="9" fill="#fff" stroke="#c2c2c2" stroke-width="1"/><path d="M76.5 815h5" stroke="#4a5fae" stroke-width="1"/><path d="M79 812.5v5" stroke="#4a5fae" stroke-width="1"/><path d="M88 810.5h6l1.5 1.6h8.5v8.9h-16z" fill="#2a82b4"/><path d="M89 814.4h14v5.4h-14z" fill="#74c0e4"/><path d="M89.5 813h13.5v2h-13.5z" fill="#c4e6f6"/><path d="M60 833h14M84 833h4" class="d"/><rect x="74.5" y="828.5" width="9" height="9" fill="#fff" stroke="#c2c2c2" stroke-width="1"/><path d="M76.5 833h5" stroke="#4a5fae" stroke-width="1"/><path d="M79 830.5v5" stroke="#4a5fae" stroke-width="1"/><path d="M88 828.5h6l1.5 1.6h8.5v8.9h-16z" fill="#2a82b4"/><path d="M89 832.4h14v5.4h-14z" fill="#74c0e4"/><path d="M89.5 831h13.5v2h-13.5z" fill="#c4e6f6"/><path d="M60 851h14M84 851h4" class="d"/><rect x="74.5" y="846.5" width="9" height="9" fill="#fff" stroke="#c2c2c2" stroke-width="1"/><path d="M76.5 851h5" stroke="#4a5fae" stroke-width="1"/><path d="M79 848.5v5" stroke="#4a5fae" stroke-width="1"/><path d="M88 846.5h6l1.5 1.6h8.5v8.9h-16z" fill="#2a82b4"/><path d="M89 850.4h14v5.4h-14z" fill="#74c0e4"/><path d="M89.5 849h13.5v2h-13.5z" fill="#c4e6f6"/><path d="M60 869h14M84 869h4" class="d"/><rect x="74.5" y="864.5" width="9" height="9" fill="#fff" stroke="#c2c2c2" stroke-width="1"/><path d="M76.5 869h5" stroke="#4a5fae" stroke-width="1"/><path d="M79 866.5v5" stroke="#4a5fae" stroke-width="1"/><path d="M88 864.5h6l1.5 1.6h8.5v8.9h-16z" fill="#2a82b4"/><path d="M89 868.4h14v5.4h-14z" fill="#74c0e4"/><path d="M89.5 867h13.5v2h-13.5z" fill="#c4e6f6"/><path d="M60 887h14M84 887h4" class="d"/><rect x="74.5" y="882.5" width="9" height="9" fill="#fff" stroke="#c2c2c2" stroke-width="1"/><path d="M76.5 887h5" stroke="#4a5fae" stroke-width="1"/><path d="M79 884.5v5" stroke="#4a5fae" stroke-width="1"/><path d="M88 882.5h6l1.5 1.6h8.5v8.9h-16z" fill="#2a82b4"/><path d="M89 886.4h14v5.4h-14z" fill="#74c0e4"/><path d="M89.5 885h13.5v2h-13.5z" fill="#c4e6f6"/><path d="M60 905h14M84 905h4" class="d"/><rect x="74.5" y="900.5" width="9" height="9" fill="#fff" stroke="#c2c2c2" stroke-width="1"/><path d="M76.5 905h5" stroke="#4a5fae" stroke-width="1"/><path d="M79 902.5v5" stroke="#4a5fae" stroke-width="1"/><path d="M88 900.5h6l1.5 1.6h8.5v8.9h-16z" fill="#2a82b4"/><path d="M89 904.4h14v5.4h-14z" fill="#74c0e4"/><path d="M89.5 903h13.5v2h-13.5z" fill="#c4e6f6"/><path d="M60 923h14M84 923h4" class="d"/><rect x="74.5" y="918.5" width="9" height="9" fill="#fff" stroke="#c2c2c2" stroke-width="1"/><path d="M76.5 923h5" stroke="#4a5fae" stroke-width="1"/><path d="M79 920.5v5" stroke="#4a5fae" stroke-width="1"/><path d="M88 918.5h6l1.5 1.6h8.5v8.9h-16z" fill="#2a82b4"/><path d="M89 922.4h14v5.4h-14z" fill="#74c0e4"/><path d="M89.5 921h13.5v2h-13.5z" fill="#c4e6f6"/><path d="M60 941h14M84 941h4" class="d"/><rect x="74.5" y="936.5" width="9" height="9" fill="#fff" stroke="#c2c2c2" stroke-width="1"/><path d="M76.5 941h5" stroke="#4a5fae" stroke-width="1"/><path d="M79 938.5v5" stroke="#4a5fae" stroke-width="1"/><path d="M88 936.5h6l1.5 1.6h8.5v8.9h-16z" fill="#2a82b4"/><path d="M89 940.4h14v5.4h-14z" fill="#74c0e4"/><path d="M89.5 939h13.5v2h-13.5z" fill="#c4e6f6"/><path d="M60 959h14M84 959h4" class="d"/><rect x="74.5" y="954.5" width="9" height="9" fill="#fff" stroke="#c2c2c2" stroke-width="1"/><path d="M76.5 959h5" stroke="#4a5fae" stroke-width="1"/><path d="M79 956.5v5" stroke="#4a5fae" stroke-width="1"/><path d="M88 954.5h6l1.5 1.6h8.5v8.9h-16z" fill="#2a82b4"/><path d="M89 958.4h14v5.4h-14z" fill="#74c0e4"/><path d="M89.5 957h13.5v2h-13.5z" fill="#c4e6f6"/><path d="M60 977h14M84 977h4" class="d"/><rect x="74.5" y="972.5" width="9" height="9" fill="#fff" stroke="#c2c2c2" stroke-width="1"/><path d="M76.5 977h5" stroke="#4a5fae" stroke-width="1"/><path d="M79 974.5v5" stroke="#4a5fae" stroke-width="1"/><path d="M88 972.5h6l1.5 1.6h8.5v8.9h-16z" fill="#2a82b4"/><path d="M89 976.4h14v5.4h-14z" fill="#74c0e4"/><path d="M89.5 975h13.5v2h-13.5z" fill="#c4e6f6"/><path d="M60 64V977" class="d"/><path d="M79 262V527" class="d"/><path d="M98 352V473" class="d"/><path d="M98 532V635" class="d"/></svg>
</div>
<div class="abs" style="left:503px;top:48px;width:19px;height:927px;background:#f1f5fa"></div>
<div class="abs" style="left:503px;top:48px;width:19px;height:118px;background:#fff"></div>
<div class="abs" style="left:503px;top:168px;width:19px;height:731px;background:#dbe5f1"></div>
<div class="abs" style="left:522px;top:24px;width:2px;height:951px;background:#d9e4f1"></div>
<svg class="abs" style="left:507px;top:54px" width="12" height="8"><path d="M1.5 6.5l4.5-4.5l4.5 4.5" fill="none" stroke="#222" stroke-width="2.2"/></svg>
<svg class="abs" style="left:507px;top:959px" width="12" height="8"><path d="M1.5 1.5l4.5 4.5l4.5-4.5" fill="none" stroke="#222" stroke-width="2.2"/></svg>
</div>
<svg class="abs" style="left:0;top:0" width="1680" height="1050" viewBox="0 0 800 500">
<defs><clipPath id="mdiclip"><rect x="251.2" y="33.9" width="548.8" height="464.6"/></clipPath><pattern id="fine" x="712.04" y="33.5" width="4.12" height="4.1625" patternUnits="userSpaceOnUse"><path d="M0 0H4.12M0 0V4.1625" stroke="#fff" stroke-width="1.64" fill="none"/></pattern></defs>
<g clip-path="url(#mdiclip)"><rect x="251" y="33" width="549" height="467" fill="#014a95"/>
<path d="M251 33.90H800 M251 100.50H800 M251 167.10H800 M251 233.70H800 M251 300.30H800 M251 366.90H800 M251 433.50H800 M251 500.10H800" stroke="#fff" stroke-opacity=".72" stroke-width=".85" fill="none"/>
<path d="M313.4 33V500 M379.9 33V500 M446.4 33V500 M512.9 33V500 M579.4 33V500 M645.9 33V500 M712.5 33V500 M733.1 33V500" stroke="#fff" stroke-opacity=".6" stroke-width=".9" fill="none"/>
<rect x="798.9" y="33" width="1.2" height="467" fill="#a9c4e2"/>
<rect x="711.97" y="100.4" width="21.57" height="400" fill="url(#fine)" opacity=".74"/>
<path fill-rule="evenodd" fill="#fff" d="M679 33.5 a33.3 33.3 0 1 0 0.01 0z M679.4 49.2 a18.2 18.2 0 1 1 -0.01 0z"/>
<path fill="#fff" d="M679.3 79.6 L691.6 67.3 L712.2 87.9 L700 100.2z"/>
<path d="M679.5 49V86M661 67.4H698" stroke="#fff" stroke-opacity=".7" stroke-width=".7"/>
<rect x="712.5" y="33.4" width="20.6" height="66.8" fill="#fff"/>
<g fill="#014a95"><rect x="712.97" y="34.42" width="3.1" height="3.12"/><rect x="712.97" y="38.58" width="3.1" height="3.12"/><rect x="712.97" y="42.74" width="3.1" height="3.12"/><rect x="712.97" y="46.91" width="3.1" height="3.12"/><rect x="712.97" y="51.07" width="3.1" height="3.12"/><rect x="712.97" y="55.23" width="3.1" height="3.12"/><rect x="712.97" y="59.40" width="3.1" height="3.12"/><rect x="712.97" y="63.56" width="3.1" height="3.12"/><rect x="712.97" y="67.72" width="3.1" height="3.12"/><rect x="712.97" y="71.88" width="3.1" height="3.12"/><rect x="712.97" y="76.05" width="3.1" height="3.12"/><rect x="712.97" y="80.21" width="3.1" height="3.12"/><rect x="712.97" y="84.37" width="3.1" height="3.12"/><rect x="712.97" y="88.53" width="3.1" height="3.12"/><rect x="712.97" y="92.69" width="3.1" height="3.12"/><rect x="712.97" y="96.86" width="3.1" height="3.12"/><rect x="717.09" y="51.07" width="3.08" height="3.12"/><rect x="721.21" y="51.07" width="3.08" height="3.12"/><rect x="725.33" y="51.07" width="3.08" height="3.12"/><rect x="729.45" y="51.07" width="3.08" height="3.12"/></g>
<g fill="#fff" stroke="#fff" stroke-width=".32" font-family="Liberation Sans, sans-serif" font-size="10.6"><text x="736.5" y="48.1" textLength="58.5" lengthAdjust="spacingAndGlyphs">CENTRÁLNÍ</text><text x="736.5" y="59" textLength="38.5" lengthAdjust="spacingAndGlyphs">MOZEK</text><text x="736.5" y="70" textLength="35" lengthAdjust="spacingAndGlyphs">FIRMY</text></g>
<g transform="translate(347.7 460.4)"><path d="M-6.3999999999999995 5.9L5.5 -6.9" stroke="#7b746e" stroke-width="4.2"/><path d="M9.17 -10.09A3.05 3.05 0 1 0 9.17 -6.51" fill="none" stroke="#7b746e" stroke-width="3.3"/><path d="M-10.07 5.51A3.05 3.05 0 1 1 -10.07 9.09" fill="none" stroke="#7b746e" stroke-width="3.3"/><path d="M-11.7 -12L-6.6 -9.2L-9.1 -6.7z" fill="#c4c4c4"/><path d="M-8.6 -8.7L-1.5 -0.8" stroke="#d0d0d0" stroke-width="1.6"/><g transform="translate(3.6 4.3) rotate(41.5)"><rect x="-8.9" y="-3.3" width="17.8" height="6.6" rx="1.5" fill="#e3262b"/><path d="M-7.3 -1.6c-.4 1.2 -.2 2.6 .6 3.5" stroke="#fff" stroke-width=".9" fill="none" opacity=".85"/><path d="M1.5 -2.1v4.2M3.3 -2.1v4.2M5.1 -2.1v4.2M6.900 -2.1v4.2M.6 -.9h7M.6 .9h7" stroke="#b01818" stroke-width=".5" fill="none" opacity=".9"/></g><ellipse cx="-7.6" cy="15.3" rx="4.5" ry="1.3" fill="#7b746e" opacity=".22"/><ellipse cx="8.5" cy="15.3" rx="3.5" ry="1.3" fill="#e3262b" opacity=".25"/></g>
<g transform="translate(414.2 460.4)"><path d="M-6.3999999999999995 5.9L5.5 -6.9" stroke="#7b746e" stroke-width="4.2"/><path d="M9.17 -10.09A3.05 3.05 0 1 0 9.17 -6.51" fill="none" stroke="#7b746e" stroke-width="3.3"/><path d="M-10.07 5.51A3.05 3.05 0 1 1 -10.07 9.09" fill="none" stroke="#7b746e" stroke-width="3.3"/><path d="M-11.7 -12L-6.6 -9.2L-9.1 -6.7z" fill="#c4c4c4"/><path d="M-8.6 -8.7L-1.5 -0.8" stroke="#d0d0d0" stroke-width="1.6"/><g transform="translate(3.6 4.3) rotate(41.5)"><rect x="-8.9" y="-3.3" width="17.8" height="6.6" rx="1.5" fill="#4a93e0"/><path d="M-7.3 -1.6c-.4 1.2 -.2 2.6 .6 3.5" stroke="#fff" stroke-width=".9" fill="none" opacity=".85"/><path d="M1.5 -2.1v4.2M3.3 -2.1v4.2M5.1 -2.1v4.2M6.900 -2.1v4.2M.6 -.9h7M.6 .9h7" stroke="#2a5fa8" stroke-width=".5" fill="none" opacity=".9"/></g><ellipse cx="-7.6" cy="15.3" rx="4.5" ry="1.3" fill="#7b746e" opacity=".22"/><ellipse cx="8.5" cy="15.3" rx="3.5" ry="1.3" fill="#4a93e0" opacity=".25"/></g>
<g transform="translate(480.7 460.4)"><path d="M-6.3999999999999995 5.9L5.5 -6.9" stroke="#7b746e" stroke-width="4.2"/><path d="M9.17 -10.09A3.05 3.05 0 1 0 9.17 -6.51" fill="none" stroke="#7b746e" stroke-width="3.3"/><path d="M-10.07 5.51A3.05 3.05 0 1 1 -10.07 9.09" fill="none" stroke="#7b746e" stroke-width="3.3"/><path d="M-11.7 -12L-6.6 -9.2L-9.1 -6.7z" fill="#c4c4c4"/><path d="M-8.6 -8.7L-1.5 -0.8" stroke="#d0d0d0" stroke-width="1.6"/><g transform="translate(3.6 4.3) rotate(41.5)"><rect x="-8.9" y="-3.3" width="17.8" height="6.6" rx="1.5" fill="#44b044"/><path d="M-7.3 -1.6c-.4 1.2 -.2 2.6 .6 3.5" stroke="#fff" stroke-width=".9" fill="none" opacity=".85"/><path d="M1.5 -2.1v4.2M3.3 -2.1v4.2M5.1 -2.1v4.2M6.900 -2.1v4.2M.6 -.9h7M.6 .9h7" stroke="#2a7a2a" stroke-width=".5" fill="none" opacity=".9"/></g><ellipse cx="-7.6" cy="15.3" rx="4.5" ry="1.3" fill="#7b746e" opacity=".22"/><ellipse cx="8.5" cy="15.3" rx="3.5" ry="1.3" fill="#44b044" opacity=".25"/></g>
<g fill="#fff" font-family="Liberation Sans, sans-serif" font-size="5.08" text-anchor="middle"><text x="347.4" y="485.8">Přehled předepsané</text><text x="347.4" y="492.2">údržby</text><text x="414" y="485.2">Servisní zásahy</text><text x="480.5" y="485.8">Zařízení servisovaná</text></g>
</g></svg>
<div class="win" style="left:533.4px;top:78.3px;width:777.2px;height:547.1px">
<div class="abs" style="left:0;top:0;width:777.2px;height:30px;background:#ebebeb"></div>
<svg class="abs" style="left:7px;top:7px" width="16" height="16" viewBox="0 0 16 16"><path d="M1 15L5 6l8-5l2 2l-6 8z" fill="#fff"/><path d="M3 13l7-7" stroke="#aaa" stroke-width="1.5"/></svg>
<span class="t" style="left:24px;top:0;line-height:30px;font-weight:bold;font-size:11.6px;color:#3a3a3a">Katalog servisních služeb</span>
<span class="t" style="left:680.4px;top:0;line-height:30px;font-weight:bold;font-size:13px;color:#333">22</span>
<svg class="abs" style="left:0;top:0" width="777.2" height="30"><path d="M705.6 15.0h11" stroke="#8a8a8a" stroke-width="1.6"/><rect x="730.8" y="10.5" width="10" height="10" fill="none" stroke="#222" stroke-width="1.4"/><path d="M756.4 10.7l9.4 9.4m0 -9.4l-9.4 9.4" stroke="#111" stroke-width="2.2"/></svg>
<div class="abs" style="left:11.1px;top:54.7px;width:615.5px;height:480.5px;border:1px solid #d5e2f2;background:#fff"></div>
<div class="abs" style="left:11.1px;top:35.7px;width:52.5px;height:20.5px;border:1px solid #d5e2f2;border-bottom:none;background:#fff"></div>
<span class="t" style="left:19.1px;top:36.7px;line-height:19px;font-size:11px;color:#222;transform:scaleX(.93)">Seznam</span>
<span class="t" style="left:68.6px;top:36.7px;line-height:19px;font-size:11px;color:#222;transform:scaleX(.93)">Detail</span><div class="abs" style="left:25.1px;top:69.7px;width:588.5px;height:453px;border:1px solid #dbe6f3;background:#f7fafe"></div>
<div class="abs" style="left:26.1px;top:70.7px;width:570.5px;height:34.5px;background:#f6f9fd"></div>
<span class="hdr" style="left:29.1px;top:72.7px">Kód služby</span>
<span class="hdr" style="left:114.6px;top:72.7px">Interní kód služby</span>
<span class="hdr" style="left:210.6px;top:72.7px">Název služby</span>
<span class="hdr" style="left:456.1px;top:72.7px">MJ</span>
<span class="hdr" style="left:488.1px;top:72.7px">Celočíselná MJ</span>
<span class="hdr" style="left:561.6px;top:72.7px">Činnos</span>
<span class="hdr" style="left:561.6px;top:85.7px">t</span>
<div class="abs" style="left:111.1px;top:70.7px;width:1px;height:34.5px;background:#fff"></div>
<div class="abs" style="left:207.1px;top:70.7px;width:1px;height:34.5px;background:#fff"></div>
<div class="abs" style="left:452.6px;top:70.7px;width:1px;height:34.5px;background:#fff"></div>
<div class="abs" style="left:484.6px;top:70.7px;width:1px;height:34.5px;background:#fff"></div>
<div class="abs" style="left:558.1px;top:70.7px;width:1px;height:34.5px;background:#fff"></div>
<div class="abs" style="left:596.1px;top:70.7px;width:1px;height:34.5px;background:#fff"></div>
<div class="cell" style="left:26.1px;top:105.7px;width:85.5px;background:#0c4a73">
<span class="g" style="transform:scaleX(.815);color:#fff">S-RETVY</span>
</div>
<div class="cell" style="left:111.6px;top:105.7px;width:96px;background:#0c4a73">
<span class="g" style="transform:scaleX(.815);color:#fff">S-RETVY</span>
</div>
<div class="abs" style="left:111.1px;top:105.7px;width:1px;height:18px;background:#7f9db5"></div>
<div class="cell" style="left:207.6px;top:105.7px;width:245.5px;background:#0c4a73">
<span class="g" style="color:#fff">Výměna řetězu</span>
</div>
<div class="abs" style="left:207.1px;top:105.7px;width:1px;height:18px;background:#7f9db5"></div>
<div class="cell" style="left:453.1px;top:105.7px;width:32.0px;background:#0c4a73">
<span class="g" style="color:#fff">ks</span>
</div>
<div class="abs" style="left:452.6px;top:105.7px;width:1px;height:18px;background:#7f9db5"></div>
<div class="cell" style="left:485.1px;top:105.7px;width:73.5px;background:#0c4a73">
<div class="abs" style="left:30.75px;top:3px;width:12px;height:12px;background:#fff;border:1px solid #fff"></div><div class="abs" style="left:34.75px;top:7px;width:4px;height:4px;background:#333"></div>
</div>
<div class="abs" style="left:484.6px;top:105.7px;width:1px;height:18px;background:#7f9db5"></div>
<div class="cell" style="left:558.6px;top:105.7px;width:38px;background:#0c4a73">
<div class="abs" style="left:15.5px;top:3px;width:12px;height:12px;background:#86a3b6;border:1px solid #6f8fa3"></div><svg class="abs" style="left:15.5px;top:3px" width="12" height="12"><path d="M2.5 6.2l2.6 2.8l4.6-6" fill="none" stroke="#1f3a4c" stroke-width="1.5"/></svg>
</div>
<div class="abs" style="left:558.1px;top:105.7px;width:1px;height:18px;background:#7f9db5"></div>
<div class="cell" style="left:26.1px;top:123.7px;width:85.5px;background:#b3f671">
<span class="g" style="transform:scaleX(.815);color:#1a1a1a">S-VYKOL</span>
</div>
<div class="cell" style="left:111.6px;top:123.7px;width:96px;background:#f5f8fc">
<span class="g" style="transform:scaleX(.815);color:#1a1a1a">S-VYKOLA</span>
</div>
<div class="cell" style="left:207.6px;top:123.7px;width:245.5px;background:#b3f671">
<span class="g" style="color:#1a1a1a">Vycentrování kola</span>
</div>
<div class="cell" style="left:453.1px;top:123.7px;width:32.0px;background:#b3f671">
<span class="g" style="color:#1a1a1a">ks</span>
</div>
<div class="cell" style="left:485.1px;top:123.7px;width:73.5px;background:#f8fbfe">
<div class="abs" style="left:30.75px;top:3px;width:12px;height:12px;background:#fff;border:1px solid #b9c3cf"></div><div class="abs" style="left:34.75px;top:7px;width:4px;height:4px;background:#333"></div>
</div>
<div class="cell" style="left:558.6px;top:123.7px;width:38px;background:#cfdcfc">
<div class="abs" style="left:15.5px;top:3px;width:12px;height:12px;background:#fdfdff;border:1px solid #c3cbd8"></div><svg class="abs" style="left:15.5px;top:3px" width="12" height="12"><path d="M2.5 6.2l2.6 2.8l4.6-6" fill="none" stroke="#8a8f99" stroke-width="1.5"/></svg>
</div>
<div class="cell" style="left:26.1px;top:141.7px;width:85.5px;background:#dcfdbe">
<span class="g" style="transform:scaleX(.815);color:#1a1a1a">S-KPNEU</span>
</div>
<div class="cell" style="left:111.6px;top:141.7px;width:96px;background:#ffffff">
<span class="g" style="transform:scaleX(.815);color:#1a1a1a">S-KPNEU</span>
</div>
<div class="cell" style="left:207.6px;top:141.7px;width:245.5px;background:#dcfdbe">
<span class="g" style="color:#1a1a1a">Kontrola nahuštění pneumatiky (včetně dohuštění)</span>
</div>
<div class="cell" style="left:453.1px;top:141.7px;width:32.0px;background:#dcfdbe">
<span class="g" style="color:#1a1a1a">ks</span>
</div>
<div class="cell" style="left:485.1px;top:141.7px;width:73.5px;background:#ffffff">
<div class="abs" style="left:30.75px;top:3px;width:12px;height:12px;background:#fff;border:1px solid #b9c3cf"></div><div class="abs" style="left:34.75px;top:7px;width:4px;height:4px;background:#333"></div>
</div>
<div class="cell" style="left:558.6px;top:141.7px;width:38px;background:#e3ecfd">
<div class="abs" style="left:15.5px;top:3px;width:12px;height:12px;background:#fdfdff;border:1px solid #c3cbd8"></div><svg class="abs" style="left:15.5px;top:3px" width="12" height="12"><path d="M2.5 6.2l2.6 2.8l4.6-6" fill="none" stroke="#8a8f99" stroke-width="1.5"/></svg>
</div>
<div class="cell" style="left:26.1px;top:159.7px;width:85.5px;background:#b3f671">
<span class="g" style="transform:scaleX(.815);color:#1a1a1a">S-PRAZE</span>
</div>
<div class="cell" style="left:111.6px;top:159.7px;width:96px;background:#f5f8fc">
<span class="g" style="transform:scaleX(.815);color:#1a1a1a">S-PRAZE</span>
</div>
<div class="cell" style="left:207.6px;top:159.7px;width:245.5px;background:#b3f671">
<span class="g" style="color:#1a1a1a">Promazání bovdenu řazení</span>
</div>
<div class="cell" style="left:453.1px;top:159.7px;width:32.0px;background:#b3f671">
<span class="g" style="color:#1a1a1a">ks</span>
</div>
<div class="cell" style="left:485.1px;top:159.7px;width:73.5px;background:#f8fbfe">
<div class="abs" style="left:30.75px;top:3px;width:12px;height:12px;background:#fff;border:1px solid #b9c3cf"></div><div class="abs" style="left:34.75px;top:7px;width:4px;height:4px;background:#333"></div>
</div>
<div class="cell" style="left:558.6px;top:159.7px;width:38px;background:#cfdcfc">
<div class="abs" style="left:15.5px;top:3px;width:12px;height:12px;background:#fdfdff;border:1px solid #c3cbd8"></div><svg class="abs" style="left:15.5px;top:3px" width="12" height="12"><path d="M2.5 6.2l2.6 2.8l4.6-6" fill="none" stroke="#8a8f99" stroke-width="1.5"/></svg>
</div>
<div class="cell" style="left:26.1px;top:177.7px;width:85.5px;background:#dcfdbe">
<span class="g" style="transform:scaleX(.815);color:#1a1a1a">S-PBRZD</span>
</div>
<div class="cell" style="left:111.6px;top:177.7px;width:96px;background:#ffffff">
<span class="g" style="transform:scaleX(.815);color:#1a1a1a">S-PBRZD</span>
</div>
<div class="cell" style="left:207.6px;top:177.7px;width:245.5px;background:#dcfdbe">
<span class="g" style="color:#1a1a1a">Promazání bovdenu brzd</span>
</div>
<div class="cell" style="left:453.1px;top:177.7px;width:32.0px;background:#dcfdbe">
<span class="g" style="color:#1a1a1a">ks</span>
</div>
<div class="cell" style="left:485.1px;top:177.7px;width:73.5px;background:#ffffff">
<div class="abs" style="left:30.75px;top:3px;width:12px;height:12px;background:#fff;border:1px solid #b9c3cf"></div><div class="abs" style="left:34.75px;top:7px;width:4px;height:4px;background:#333"></div>
</div>
<div class="cell" style="left:558.6px;top:177.7px;width:38px;background:#e3ecfd">
<div class="abs" style="left:15.5px;top:3px;width:12px;height:12px;background:#fdfdff;border:1px solid #c3cbd8"></div><svg class="abs" style="left:15.5px;top:3px" width="12" height="12"><path d="M2.5 6.2l2.6 2.8l4.6-6" fill="none" stroke="#8a8f99" stroke-width="1.5"/></svg>
</div>
<div class="cell" style="left:26.1px;top:195.7px;width:85.5px;background:#b3f671">
<span class="g" style="transform:scaleX(.815);color:#1a1a1a">S-LAMPA</span>
</div>
<div class="cell" style="left:111.6px;top:195.7px;width:96px;background:#f5f8fc">
<span class="g" style="transform:scaleX(.815);color:#1a1a1a">S-LAMPA</span>
</div>
<div class="cell" style="left:207.6px;top:195.7px;width:245.5px;background:#b3f671">
<span class="g" style="color:#1a1a1a">Výměna lampy projektoru</span>
</div>
<div class="cell" style="left:453.1px;top:195.7px;width:32.0px;background:#b3f671">
<span class="g" style="color:#1a1a1a">ks</span>
</div>
<div class="cell" style="left:485.1px;top:195.7px;width:73.5px;background:#f8fbfe">
<div class="abs" style="left:30.75px;top:3px;width:12px;height:12px;background:#fff;border:1px solid #b9c3cf"></div><div class="abs" style="left:34.75px;top:7px;width:4px;height:4px;background:#333"></div>
</div>
<div class="cell" style="left:558.6px;top:195.7px;width:38px;background:#cfdcfc">
<div class="abs" style="left:15.5px;top:3px;width:12px;height:12px;background:#fdfdff;border:1px solid #c3cbd8"></div>
</div>
<div class="cell" style="left:26.1px;top:213.7px;width:85.5px;background:#dcfdbe">
<span class="g" style="transform:scaleX(.815);color:#1a1a1a">S-CISPR</span>
</div>
<div class="cell" style="left:111.6px;top:213.7px;width:96px;background:#ffffff">
<span class="g" style="transform:scaleX(.815);color:#1a1a1a">S-CISPR</span>
</div>
<div class="cell" style="left:207.6px;top:213.7px;width:245.5px;background:#dcfdbe">
<span class="g" style="color:#1a1a1a">Čištění projektoru</span>
</div>
<div class="cell" style="left:453.1px;top:213.7px;width:32.0px;background:#dcfdbe">
<span class="g" style="color:#1a1a1a">ks</span>
</div>
<div class="cell" style="left:485.1px;top:213.7px;width:73.5px;background:#ffffff">
<div class="abs" style="left:30.75px;top:3px;width:12px;height:12px;background:#fff;border:1px solid #b9c3cf"></div><div class="abs" style="left:34.75px;top:7px;width:4px;height:4px;background:#333"></div>
</div>
<div class="cell" style="left:558.6px;top:213.7px;width:38px;background:#e3ecfd">
<div class="abs" style="left:15.5px;top:3px;width:12px;height:12px;background:#fdfdff;border:1px solid #c3cbd8"></div>
</div>
<div class="cell" style="left:26.1px;top:231.7px;width:85.5px;background:#b3f671">
<span class="g" style="transform:scaleX(.815);color:#1a1a1a">S-OPKOL</span>
</div>
<div class="cell" style="left:111.6px;top:231.7px;width:96px;background:#f5f8fc">
<span class="g" style="transform:scaleX(.815);color:#1a1a1a">S-OPKOL</span>
</div>
<div class="cell" style="left:207.6px;top:231.7px;width:245.5px;background:#b3f671">
<span class="g" style="color:#1a1a1a">Oprava kola</span>
</div>
<div class="cell" style="left:453.1px;top:231.7px;width:32.0px;background:#b3f671">
<span class="g" style="color:#1a1a1a">ks</span>
</div>
<div class="cell" style="left:485.1px;top:231.7px;width:73.5px;background:#f8fbfe">
<div class="abs" style="left:30.75px;top:3px;width:12px;height:12px;background:#fff;border:1px solid #b9c3cf"></div><div class="abs" style="left:34.75px;top:7px;width:4px;height:4px;background:#333"></div>
</div>
<div class="cell" style="left:558.6px;top:231.7px;width:38px;background:#cfdcfc">
<div class="abs" style="left:15.5px;top:3px;width:12px;height:12px;background:#fdfdff;border:1px solid #c3cbd8"></div><svg class="abs" style="left:15.5px;top:3px" width="12" height="12"><path d="M2.5 6.2l2.6 2.8l4.6-6" fill="none" stroke="#8a8f99" stroke-width="1.5"/></svg>
</div>
<div class="cell" style="left:26.1px;top:249.7px;width:85.5px;background:#dcfdbe">
<span class="g" style="transform:scaleX(.815);color:#1a1a1a">S-RETMA</span>
</div>
<div class="cell" style="left:111.6px;top:249.7px;width:96px;background:#ffffff">
<span class="g" style="transform:scaleX(.815);color:#1a1a1a">S-RETMA</span>
</div>
<div class="cell" style="left:207.6px;top:249.7px;width:245.5px;background:#dcfdbe">
<span class="g" style="color:#1a1a1a">Mazání řetězu</span>
</div>
<div class="cell" style="left:453.1px;top:249.7px;width:32.0px;background:#dcfdbe">
<span class="g" style="color:#1a1a1a">ks</span>
</div>
<div class="cell" style="left:485.1px;top:249.7px;width:73.5px;background:#ffffff">
<div class="abs" style="left:30.75px;top:3px;width:12px;height:12px;background:#fff;border:1px solid #b9c3cf"></div><div class="abs" style="left:34.75px;top:7px;width:4px;height:4px;background:#333"></div>
</div>
<div class="cell" style="left:558.6px;top:249.7px;width:38px;background:#e3ecfd">
<div class="abs" style="left:15.5px;top:3px;width:12px;height:12px;background:#fdfdff;border:1px solid #c3cbd8"></div><svg class="abs" style="left:15.5px;top:3px" width="12" height="12"><path d="M2.5 6.2l2.6 2.8l4.6-6" fill="none" stroke="#8a8f99" stroke-width="1.5"/></svg>
</div>
<div class="cell" style="left:26.1px;top:267.7px;width:85.5px;background:#b3f671">
<span class="g" style="transform:scaleX(.815);color:#1a1a1a">S-PROCLK</span>
</div>
<div class="cell" style="left:111.6px;top:267.7px;width:96px;background:#f5f8fc">
<span class="g" style="transform:scaleX(.815);color:#1a1a1a">S-PROCLK</span>
</div>
<div class="cell" style="left:207.6px;top:267.7px;width:245.5px;background:#b3f671">
<span class="g" style="color:#1a1a1a">Celková prohlídka kola</span>
</div>
<div class="cell" style="left:453.1px;top:267.7px;width:32.0px;background:#b3f671">
<span class="g" style="color:#1a1a1a">ks</span>
</div>
<div class="cell" style="left:485.1px;top:267.7px;width:73.5px;background:#f8fbfe">
<div class="abs" style="left:30.75px;top:3px;width:12px;height:12px;background:#fff;border:1px solid #b9c3cf"></div><div class="abs" style="left:34.75px;top:7px;width:4px;height:4px;background:#333"></div>
</div>
<div class="cell" style="left:558.6px;top:267.7px;width:38px;background:#cfdcfc">
<div class="abs" style="left:15.5px;top:3px;width:12px;height:12px;background:#fdfdff;border:1px solid #c3cbd8"></div><svg class="abs" style="left:15.5px;top:3px" width="12" height="12"><path d="M2.5 6.2l2.6 2.8l4.6-6" fill="none" stroke="#8a8f99" stroke-width="1.5"/></svg>
</div>
<div class="cell" style="left:26.1px;top:285.7px;width:85.5px;background:#dcfdbe">
<span class="g" style="transform:scaleX(.815);color:#1a1a1a">S-PROZAR</span>
</div>
<div class="cell" style="left:111.6px;top:285.7px;width:96px;background:#ffffff">
<span class="g" style="transform:scaleX(.815);color:#1a1a1a">S-PROZAR</span>
</div>
<div class="cell" style="left:207.6px;top:285.7px;width:245.5px;background:#dcfdbe">
<span class="g" style="color:#1a1a1a">Povinná záruční prohlídka kola</span>
</div>
<div class="cell" style="left:453.1px;top:285.7px;width:32.0px;background:#dcfdbe">
<span class="g" style="color:#1a1a1a">ks</span>
</div>
<div class="cell" style="left:485.1px;top:285.7px;width:73.5px;background:#ffffff">
<div class="abs" style="left:30.75px;top:3px;width:12px;height:12px;background:#fff;border:1px solid #b9c3cf"></div><div class="abs" style="left:34.75px;top:7px;width:4px;height:4px;background:#333"></div>
</div>
<div class="cell" style="left:558.6px;top:285.7px;width:38px;background:#e3ecfd">
<div class="abs" style="left:15.5px;top:3px;width:12px;height:12px;background:#fdfdff;border:1px solid #c3cbd8"></div><svg class="abs" style="left:15.5px;top:3px" width="12" height="12"><path d="M2.5 6.2l2.6 2.8l4.6-6" fill="none" stroke="#8a8f99" stroke-width="1.5"/></svg>
</div>
<div class="cell" style="left:26.1px;top:303.7px;width:85.5px;background:#b3f671">
<span class="g" style="transform:scaleX(.815);color:#1a1a1a">S-SERVPRA</span>
</div>
<div class="cell" style="left:111.6px;top:303.7px;width:96px;background:#f5f8fc">
<span class="g" style="transform:scaleX(.815);color:#1a1a1a">S-SERVPRA</span>
</div>
<div class="cell" style="left:207.6px;top:303.7px;width:245.5px;background:#b3f671">
<span class="g" style="color:#1a1a1a">Pravidelný servis</span>
</div>
<div class="cell" style="left:453.1px;top:303.7px;width:32.0px;background:#b3f671">
<span class="g" style="color:#1a1a1a">ks</span>
</div>
<div class="cell" style="left:485.1px;top:303.7px;width:73.5px;background:#f8fbfe">
<div class="abs" style="left:30.75px;top:3px;width:12px;height:12px;background:#fff;border:1px solid #b9c3cf"></div><div class="abs" style="left:34.75px;top:7px;width:4px;height:4px;background:#333"></div>
</div>
<div class="cell" style="left:558.6px;top:303.7px;width:38px;background:#cfdcfc">
<div class="abs" style="left:15.5px;top:3px;width:12px;height:12px;background:#fdfdff;border:1px solid #c3cbd8"></div>
</div>
<div class="cell" style="left:26.1px;top:321.7px;width:85.5px;background:#dcfdbe">
<span class="g" style="transform:scaleX(.815);color:#1a1a1a">S-SERLAS</span>
</div>
<div class="cell" style="left:111.6px;top:321.7px;width:96px;background:#ffffff">
<span class="g" style="transform:scaleX(.815);color:#1a1a1a">S-SERLAS</span>
</div>
<div class="cell" style="left:207.6px;top:321.7px;width:245.5px;background:#dcfdbe">
<span class="g" style="color:#1a1a1a">Seřízení laseru</span>
</div>
<div class="cell" style="left:453.1px;top:321.7px;width:32.0px;background:#dcfdbe">
<span class="g" style="color:#1a1a1a">ks</span>
</div>
<div class="cell" style="left:485.1px;top:321.7px;width:73.5px;background:#ffffff">
<div class="abs" style="left:30.75px;top:3px;width:12px;height:12px;background:#fff;border:1px solid #b9c3cf"></div><div class="abs" style="left:34.75px;top:7px;width:4px;height:4px;background:#333"></div>
</div>
<div class="cell" style="left:558.6px;top:321.7px;width:38px;background:#e3ecfd">
<div class="abs" style="left:15.5px;top:3px;width:12px;height:12px;background:#fdfdff;border:1px solid #c3cbd8"></div>
</div>
<div class="cell" style="left:26.1px;top:339.7px;width:85.5px;background:#b3f671">
<span class="g" style="transform:scaleX(.815);color:#1a1a1a">S-VSP</span>
</div>
<div class="cell" style="left:111.6px;top:339.7px;width:96px;background:#f5f8fc">
<span class="g" style="transform:scaleX(.815);color:#1a1a1a">S-VSP</span>
</div>
<div class="cell" style="left:207.6px;top:339.7px;width:245.5px;background:#b3f671">
<span class="g" style="color:#1a1a1a">Výměna sady pneumatik u automobilu</span>
</div>
<div class="cell" style="left:453.1px;top:339.7px;width:32.0px;background:#b3f671">
<span class="g" style="color:#1a1a1a">ks</span>
</div>
<div class="cell" style="left:485.1px;top:339.7px;width:73.5px;background:#f8fbfe">
<div class="abs" style="left:30.75px;top:3px;width:12px;height:12px;background:#fff;border:1px solid #b9c3cf"></div><div class="abs" style="left:34.75px;top:7px;width:4px;height:4px;background:#333"></div>
</div>
<div class="cell" style="left:558.6px;top:339.7px;width:38px;background:#cfdcfc">
<div class="abs" style="left:15.5px;top:3px;width:12px;height:12px;background:#fdfdff;border:1px solid #c3cbd8"></div>
</div>
<div class="cell" style="left:26.1px;top:357.7px;width:85.5px;background:#dcfdbe">
<span class="g" style="transform:scaleX(.815);color:#1a1a1a">S-STK</span>
</div>
<div class="cell" style="left:111.6px;top:357.7px;width:96px;background:#ffffff">
<span class="g" style="transform:scaleX(.815);color:#1a1a1a">S-STK</span>
</div>
<div class="cell" style="left:207.6px;top:357.7px;width:245.5px;background:#dcfdbe">
<span class="g" style="color:#1a1a1a">Státní technická kontrola</span>
</div>
<div class="cell" style="left:453.1px;top:357.7px;width:32.0px;background:#dcfdbe">
<span class="g" style="color:#1a1a1a">ks</span>
</div>
<div class="cell" style="left:485.1px;top:357.7px;width:73.5px;background:#ffffff">
<div class="abs" style="left:30.75px;top:3px;width:12px;height:12px;background:#fff;border:1px solid #b9c3cf"></div><div class="abs" style="left:34.75px;top:7px;width:4px;height:4px;background:#333"></div>
</div>
<div class="cell" style="left:558.6px;top:357.7px;width:38px;background:#e3ecfd">
<div class="abs" style="left:15.5px;top:3px;width:12px;height:12px;background:#fdfdff;border:1px solid #c3cbd8"></div>
</div>
<div class="cell" style="left:26.1px;top:375.7px;width:85.5px;background:#b3f671">
<span class="g" style="transform:scaleX(.815);color:#1a1a1a">S-SERVPRAUTO</span>
</div>
<div class="cell" style="left:111.6px;top:375.7px;width:96px;background:#f5f8fc">
<span class="g" style="transform:scaleX(.815);color:#1a1a1a">S-SERVPRAUTO</span>
</div>
<div class="cell" style="left:207.6px;top:375.7px;width:245.5px;background:#b3f671">
<span class="g" style="color:#1a1a1a">Pravidelný servis automobilu</span>
</div>
<div class="cell" style="left:453.1px;top:375.7px;width:32.0px;background:#b3f671">
<span class="g" style="color:#1a1a1a">ks</span>
</div>
<div class="cell" style="left:485.1px;top:375.7px;width:73.5px;background:#f8fbfe">
<div class="abs" style="left:30.75px;top:3px;width:12px;height:12px;background:#fff;border:1px solid #b9c3cf"></div><div class="abs" style="left:34.75px;top:7px;width:4px;height:4px;background:#333"></div>
</div>
<div class="cell" style="left:558.6px;top:375.7px;width:38px;background:#cfdcfc">
<div class="abs" style="left:15.5px;top:3px;width:12px;height:12px;background:#fdfdff;border:1px solid #c3cbd8"></div>
</div>
<div class="cell" style="left:26.1px;top:393.7px;width:85.5px;background:#dcfdbe">
<span class="g" style="transform:scaleX(.815);color:#1a1a1a">S-OPKV</span>
</div>
<div class="cell" style="left:111.6px;top:393.7px;width:96px;background:#ffffff">
<span class="g" style="transform:scaleX(.815);color:#1a1a1a">S-OPKV</span>
</div>
<div class="cell" style="left:207.6px;top:393.7px;width:245.5px;background:#dcfdbe">
<span class="g" style="color:#1a1a1a">Výměna vidlice</span>
</div>
<div class="cell" style="left:453.1px;top:393.7px;width:32.0px;background:#dcfdbe">
<span class="g" style="color:#1a1a1a">hod</span>
</div>
<div class="cell" style="left:485.1px;top:393.7px;width:73.5px;background:#ffffff">
<div class="abs" style="left:30.75px;top:3px;width:12px;height:12px;background:#fff;border:1px solid #b9c3cf"></div><div class="abs" style="left:34.75px;top:7px;width:4px;height:4px;background:#333"></div>
</div>
<div class="cell" style="left:558.6px;top:393.7px;width:38px;background:#e3ecfd">
<div class="abs" style="left:15.5px;top:3px;width:12px;height:12px;background:#fdfdff;border:1px solid #c3cbd8"></div><svg class="abs" style="left:15.5px;top:3px" width="12" height="12"><path d="M2.5 6.2l2.6 2.8l4.6-6" fill="none" stroke="#8a8f99" stroke-width="1.5"/></svg>
</div>
<div class="cell" style="left:26.1px;top:411.7px;width:85.5px;background:#b3f671">
<span class="g" style="transform:scaleX(.815);color:#1a1a1a">S-OPKL</span>
</div>
<div class="cell" style="left:111.6px;top:411.7px;width:96px;background:#f5f8fc">
<span class="g" style="transform:scaleX(.815);color:#1a1a1a">S-OPKL</span>
</div>
<div class="cell" style="left:207.6px;top:411.7px;width:245.5px;background:#b3f671">
<span class="g" style="color:#1a1a1a">Výměna klik a šlapacího středu</span>
</div>
<div class="cell" style="left:453.1px;top:411.7px;width:32.0px;background:#b3f671">
<span class="g" style="color:#1a1a1a">hod</span>
</div>
<div class="cell" style="left:485.1px;top:411.7px;width:73.5px;background:#f8fbfe">
<div class="abs" style="left:30.75px;top:3px;width:12px;height:12px;background:#fff;border:1px solid #b9c3cf"></div><div class="abs" style="left:34.75px;top:7px;width:4px;height:4px;background:#333"></div>
</div>
<div class="cell" style="left:558.6px;top:411.7px;width:38px;background:#cfdcfc">
<div class="abs" style="left:15.5px;top:3px;width:12px;height:12px;background:#fdfdff;border:1px solid #c3cbd8"></div><svg class="abs" style="left:15.5px;top:3px" width="12" height="12"><path d="M2.5 6.2l2.6 2.8l4.6-6" fill="none" stroke="#8a8f99" stroke-width="1.5"/></svg>
</div>
<div class="cell" style="left:26.1px;top:429.7px;width:85.5px;background:#dcfdbe">
<span class="g" style="transform:scaleX(.815);color:#1a1a1a">S-OPS</span>
</div>
<div class="cell" style="left:111.6px;top:429.7px;width:96px;background:#ffffff">
<span class="g" style="transform:scaleX(.815);color:#1a1a1a">S-OPS</span>
</div>
<div class="cell" style="left:207.6px;top:429.7px;width:245.5px;background:#dcfdbe">
<span class="g" style="color:#1a1a1a">Výměna sedlovky</span>
</div>
<div class="cell" style="left:453.1px;top:429.7px;width:32.0px;background:#dcfdbe">
<span class="g" style="color:#1a1a1a">hod</span>
</div>
<div class="cell" style="left:485.1px;top:429.7px;width:73.5px;background:#ffffff">
<div class="abs" style="left:30.75px;top:3px;width:12px;height:12px;background:#fff;border:1px solid #b9c3cf"></div><div class="abs" style="left:34.75px;top:7px;width:4px;height:4px;background:#333"></div>
</div>
<div class="cell" style="left:558.6px;top:429.7px;width:38px;background:#e3ecfd">
<div class="abs" style="left:15.5px;top:3px;width:12px;height:12px;background:#fdfdff;border:1px solid #c3cbd8"></div><svg class="abs" style="left:15.5px;top:3px" width="12" height="12"><path d="M2.5 6.2l2.6 2.8l4.6-6" fill="none" stroke="#8a8f99" stroke-width="1.5"/></svg>
</div>
<div class="cell" style="left:26.1px;top:447.7px;width:85.5px;background:#b3f671">
<span class="g" style="transform:scaleX(.815);color:#1a1a1a">S-ZAV</span>
</div>
<div class="cell" style="left:111.6px;top:447.7px;width:96px;background:#f5f8fc">
<span class="g" style="transform:scaleX(.815);color:#1a1a1a">S-ZAV</span>
</div>
<div class="cell" style="left:207.6px;top:447.7px;width:245.5px;background:#b3f671">
<span class="g" style="color:#1a1a1a">Soustružení závitu</span>
</div>
<div class="cell" style="left:453.1px;top:447.7px;width:32.0px;background:#b3f671">
<span class="g" style="color:#1a1a1a">hod</span>
</div>
<div class="cell" style="left:485.1px;top:447.7px;width:73.5px;background:#f8fbfe">
<div class="abs" style="left:30.75px;top:3px;width:12px;height:12px;background:#fff;border:1px solid #b9c3cf"></div><div class="abs" style="left:34.75px;top:7px;width:4px;height:4px;background:#333"></div>
</div>
<div class="cell" style="left:558.6px;top:447.7px;width:38px;background:#cfdcfc">
<div class="abs" style="left:15.5px;top:3px;width:12px;height:12px;background:#fdfdff;border:1px solid #c3cbd8"></div>
</div>
<div class="cell" style="left:26.1px;top:465.7px;width:85.5px;background:#dcfdbe">
<span class="g" style="transform:scaleX(.815);color:#1a1a1a">S-BRUS</span>
</div>
<div class="cell" style="left:111.6px;top:465.7px;width:96px;background:#ffffff">
<span class="g" style="transform:scaleX(.815);color:#1a1a1a">S-BRUS</span>
</div>
<div class="cell" style="left:207.6px;top:465.7px;width:245.5px;background:#dcfdbe">
<span class="g" style="color:#1a1a1a">Broušení hran</span>
</div>
<div class="cell" style="left:453.1px;top:465.7px;width:32.0px;background:#dcfdbe">
<span class="g" style="color:#1a1a1a">ks</span>
</div>
<div class="cell" style="left:485.1px;top:465.7px;width:73.5px;background:#ffffff">
<div class="abs" style="left:30.75px;top:3px;width:12px;height:12px;background:#fff;border:1px solid #b9c3cf"></div><div class="abs" style="left:34.75px;top:7px;width:4px;height:4px;background:#333"></div>
</div>
<div class="cell" style="left:558.6px;top:465.7px;width:38px;background:#e3ecfd">
<div class="abs" style="left:15.5px;top:3px;width:12px;height:12px;background:#fdfdff;border:1px solid #c3cbd8"></div>
</div>
<div class="cell" style="left:26.1px;top:483.7px;width:85.5px;background:#b3f671">
<span class="g" style="transform:scaleX(.815);color:#1a1a1a">POKUS</span>
</div>
<div class="cell" style="left:111.6px;top:483.7px;width:96px;background:#f5f8fc">
<span class="g" style="transform:scaleX(.815);color:#1a1a1a">POKUS</span>
</div>
<div class="cell" style="left:207.6px;top:483.7px;width:245.5px;background:#b3f671">
<span class="g" style="color:#1a1a1a">Pokus</span>
</div>
<div class="cell" style="left:453.1px;top:483.7px;width:32.0px;background:#b3f671">
<span class="g" style="color:#1a1a1a">ks</span>
</div>
<div class="cell" style="left:485.1px;top:483.7px;width:73.5px;background:#f8fbfe">
<div class="abs" style="left:30.75px;top:3px;width:12px;height:12px;background:#fff;border:1px solid #b9c3cf"></div><div class="abs" style="left:34.75px;top:7px;width:4px;height:4px;background:#333"></div>
</div>
<div class="cell" style="left:558.6px;top:483.7px;width:38px;background:#cfdcfc">
<div class="abs" style="left:15.5px;top:3px;width:12px;height:12px;background:#fdfdff;border:1px solid #c3cbd8"></div>
</div>
<div class="abs" style="left:596.6px;top:70.7px;width:16px;height:432.5px;background:#f1f5fa"></div>
<div class="abs" style="left:596.6px;top:86.7px;width:16px;height:203px;background:#dbe5f1"></div>
<div class="abs" style="left:596.6px;top:70.7px;width:16px;height:16px;background:#fff"></div>
<svg class="abs" style="left:599.1px;top:77.7px" width="11" height="8"><path d="M1.2 6.2l4.3-4.3l4.3 4.3" fill="none" stroke="#222" stroke-width="2.2"/></svg>
<svg class="abs" style="left:599.1px;top:490.2px" width="11" height="8"><path d="M1.2 1.5l4.3 4.3l4.3-4.3" fill="none" stroke="#222" stroke-width="2.2"/></svg>
<div class="abs" style="left:26.1px;top:503.2px;width:586.5px;height:18.5px;background:#f1f5fa"></div>
<div class="abs" style="left:26.1px;top:503.2px;width:17px;height:18.5px;background:#fff"></div>
<div class="abs" style="left:43.1px;top:503.2px;width:17px;height:18.5px;background:#dbe5f1"></div>
<svg class="abs" style="left:30.1px;top:506.95000000000005px" width="8" height="11"><path d="M6.2 1.2l-4.3 4.3l4.3 4.3" fill="none" stroke="#222" stroke-width="2.2"/></svg>
<svg class="abs" style="left:583.6px;top:506.95000000000005px" width="8" height="11"><path d="M1.5 1.2l4.3 4.3l-4.3 4.3" fill="none" stroke="#222" stroke-width="2.2"/></svg><div class="btn" style="left:638.6px;top:56.7px">Detail zboží</div>
<div class="btn" style="left:638.6px;top:84.7px">Zařaz.servis.procesu</div>
<div class="btn" style="left:638.6px;top:112.7px">Vyřaz.servis.procesu</div>
<div class="btn" style="left:638.6px;top:140.7px">Činnosti<span style="position:absolute;right:7px;top:6px;width:0;height:0;border-top:4.5px solid transparent;border-bottom:4.5px solid transparent;border-left:5px solid #fff"></span></div>
<div class="btn" style="left:638.6px;top:512.7px">Multivýběr služeb</div>
</div>
<div class="win" style="left:533.4px;top:625.4px;width:777.2px;height:292.3px">
<div class="abs" style="left:0;top:0;width:777.2px;height:29px;background:#1b476a"></div>
<svg class="abs" style="left:5px;top:5px" width="16" height="18" viewBox="0 0 16 18"><path d="M1 1L15 9L1 17z" fill="#fff"/><path d="M3.5 6l5 3l-5 3z" fill="#1c4567" opacity=".25"/></svg>
<span class="t" style="left:23.5px;top:0;line-height:29px;font-weight:bold;font-size:11.5px;color:#fff">Náhradní díly</span>
<span class="t" style="left:680.4px;top:0;line-height:29px;font-weight:bold;font-size:13px;color:#fff">11</span>
<svg class="abs" style="left:0;top:0" width="777.2" height="29"><path d="M705.6 14.5h11" stroke="#9fb3c6" stroke-width="1.6"/><rect x="730.8" y="10.0" width="10" height="10" fill="none" stroke="#fff" stroke-width="1.4"/><path d="M756.4 10.2l9.4 9.4m0 -9.4l-9.4 9.4" stroke="#fff" stroke-width="1.6"/></svg>
<div class="abs" style="left:10.6px;top:56.1px;width:619.5px;height:224.5px;border:1px solid #d5e2f2;background:#fff"></div>
<div class="abs" style="left:10.6px;top:37.6px;width:52.5px;height:20.0px;border:1px solid #d5e2f2;border-bottom:none;background:#fff"></div>
<span class="t" style="left:18.6px;top:38.6px;line-height:18.5px;font-size:11px;color:#222;transform:scaleX(.93)">Seznam</span>
<span class="t" style="left:68.1px;top:38.6px;line-height:18.5px;font-size:11px;color:#222;transform:scaleX(.93)">Detail</span><div class="abs" style="left:25.1px;top:70.6px;width:592.5px;height:196.5px;border:1px solid #dbe6f3;background:#f7fafe"></div>
<div class="abs" style="left:26.1px;top:71.6px;width:575.0px;height:35.5px;background:#f6f9fd"></div>
<span class="hdr" style="left:29.1px;top:73.6px">Kód náhradního</span>
<span class="hdr" style="left:29.1px;top:86.6px">dílu</span>
<span class="hdr" style="left:114.1px;top:73.6px">Název náhradního dílu</span>
<span class="hdr" style="left:389.6px;top:73.6px">MJ</span>
<span class="hdr" style="left:420.1px;top:73.6px">Celočíselná</span>
<span class="hdr" style="left:420.1px;top:86.6px">MJ</span>
<span class="hdr" style="left:481.1px;top:73.6px">% DPH</span>
<span class="hdr" style="left:545.6px;top:73.6px">Skladová</span>
<span class="hdr" style="left:545.6px;top:86.6px">položka</span>
<div class="abs" style="left:110.6px;top:71.6px;width:1px;height:35.5px;background:#fff"></div>
<div class="abs" style="left:386.1px;top:71.6px;width:1px;height:35.5px;background:#fff"></div>
<div class="abs" style="left:416.6px;top:71.6px;width:1px;height:35.5px;background:#fff"></div>
<div class="abs" style="left:477.6px;top:71.6px;width:1px;height:35.5px;background:#fff"></div>
<div class="abs" style="left:542.1px;top:71.6px;width:1px;height:35.5px;background:#fff"></div>
<div class="abs" style="left:600.6px;top:71.6px;width:1px;height:35.5px;background:#fff"></div>
<div class="cell" style="left:26.1px;top:107.6px;width:85.0px;background:#0c4a73">
<span class="g" style="transform:scaleX(.815);color:#a9bccd">PVMARM</span>
</div>
<div class="cell" style="left:111.1px;top:107.6px;width:275.5px;background:#0c4a73">
<span class="g" style="color:#fff">Přední vidlice Marzocchi MX Comp</span>
</div>
<div class="abs" style="left:110.6px;top:107.6px;width:1px;height:18px;background:#7f9db5"></div>
<div class="cell" style="left:386.6px;top:107.6px;width:30.5px;background:#0c4a73">
<span class="g" style="color:#fff">ks</span>
</div>
<div class="abs" style="left:386.1px;top:107.6px;width:1px;height:18px;background:#7f9db5"></div>
<div class="cell" style="left:417.1px;top:107.6px;width:61.0px;background:#0c4a73">
<div class="abs" style="left:24.5px;top:3px;width:12px;height:12px;background:#fff;border:1px solid #fff"></div><div class="abs" style="left:28.5px;top:7px;width:4px;height:4px;background:#333"></div>
</div>
<div class="abs" style="left:416.6px;top:107.6px;width:1px;height:18px;background:#7f9db5"></div>
<div class="cell" style="left:478.1px;top:107.6px;width:64.5px;background:#0c4a73">
<span class="g" style="left:auto;right:4px;transform-origin:100% 50%;color:#fff">21</span>
</div>
<div class="abs" style="left:477.6px;top:107.6px;width:1px;height:18px;background:#7f9db5"></div>
<div class="cell" style="left:542.6px;top:107.6px;width:58.5px;background:#0c4a73">
<span class="g" style="color:#fff">Ano</span>
</div>
<div class="abs" style="left:542.1px;top:107.6px;width:1px;height:18px;background:#7f9db5"></div>
<div class="cell" style="left:26.1px;top:125.6px;width:85.0px;background:#b3f671">
<span class="g" style="transform:scaleX(.815);color:#1a1a1a">ŘSHG7</span>
</div>
<div class="cell" style="left:111.1px;top:125.6px;width:275.5px;background:#b3f671">
<span class="g" style="color:#1a1a1a">Řetěz Shimano HG-73</span>
</div>
<div class="cell" style="left:386.6px;top:125.6px;width:30.5px;background:#b3f671">
<span class="g" style="color:#1a1a1a">ks</span>
</div>
<div class="cell" style="left:417.1px;top:125.6px;width:61.0px;background:#f8fbfe">
<div class="abs" style="left:24.5px;top:3px;width:12px;height:12px;background:#fff;border:1px solid #b9c3cf"></div><div class="abs" style="left:28.5px;top:7px;width:4px;height:4px;background:#333"></div>
</div>
<div class="cell" style="left:478.1px;top:125.6px;width:64.5px;background:#cfdcfc">
<span class="g" style="left:auto;right:4px;transform-origin:100% 50%;color:#1a1a1a">21</span>
</div>
<div class="cell" style="left:542.6px;top:125.6px;width:58.5px;background:#b3f671">
<span class="g" style="color:#1a1a1a">Ano</span>
</div>
<div class="cell" style="left:26.1px;top:143.6px;width:85.0px;background:#dcfdbe">
<span class="g" style="transform:scaleX(.815);color:#1a1a1a">BHAYP</span>
</div>
<div class="cell" style="left:111.1px;top:143.6px;width:275.5px;background:#dcfdbe">
<span class="g" style="color:#1a1a1a">Brzda Hayes Sole XC kotoučová hydraulická (6&quot;) (přední)</span>
</div>
<div class="cell" style="left:386.6px;top:143.6px;width:30.5px;background:#dcfdbe">
<span class="g" style="color:#1a1a1a">ks</span>
</div>
<div class="cell" style="left:417.1px;top:143.6px;width:61.0px;background:#ffffff">
<div class="abs" style="left:24.5px;top:3px;width:12px;height:12px;background:#fff;border:1px solid #b9c3cf"></div><div class="abs" style="left:28.5px;top:7px;width:4px;height:4px;background:#333"></div>
</div>
<div class="cell" style="left:478.1px;top:143.6px;width:64.5px;background:#e3ecfd">
<span class="g" style="left:auto;right:4px;transform-origin:100% 50%;color:#1a1a1a">21</span>
</div>
<div class="cell" style="left:542.6px;top:143.6px;width:58.5px;background:#dcfdbe">
<span class="g" style="color:#1a1a1a">Ano</span>
</div>
<div class="cell" style="left:26.1px;top:161.6px;width:85.0px;background:#b3f671">
<span class="g" style="transform:scaleX(.815);color:#1a1a1a">BOVDEN</span>
</div>
<div class="cell" style="left:111.1px;top:161.6px;width:275.5px;background:#b3f671">
<span class="g" style="color:#1a1a1a">Bovden (brzdy)</span>
</div>
<div class="cell" style="left:386.6px;top:161.6px;width:30.5px;background:#b3f671">
<span class="g" style="color:#1a1a1a">m</span>
</div>
<div class="cell" style="left:417.1px;top:161.6px;width:61.0px;background:#f8fbfe">
<div class="abs" style="left:24.5px;top:3px;width:12px;height:12px;background:#fff;border:1px solid #b9c3cf"></div><div class="abs" style="left:28.5px;top:7px;width:4px;height:4px;background:#333"></div>
</div>
<div class="cell" style="left:478.1px;top:161.6px;width:64.5px;background:#cfdcfc">
<span class="g" style="left:auto;right:4px;transform-origin:100% 50%;color:#1a1a1a">21</span>
</div>
<div class="cell" style="left:542.6px;top:161.6px;width:58.5px;background:#b3f671">
<span class="g" style="color:#1a1a1a">Ano</span>
</div>
<div class="cell" style="left:26.1px;top:179.6px;width:85.0px;background:#dcfdbe">
<span class="g" style="transform:scaleX(.815);color:#1a1a1a">KONCL</span>
</div>
<div class="cell" style="left:111.1px;top:179.6px;width:275.5px;background:#dcfdbe">
<span class="g" style="color:#1a1a1a">Koncovky na lanka</span>
</div>
<div class="cell" style="left:386.6px;top:179.6px;width:30.5px;background:#dcfdbe">
<span class="g" style="color:#1a1a1a">ks</span>
</div>
<div class="cell" style="left:417.1px;top:179.6px;width:61.0px;background:#ffffff">
<div class="abs" style="left:24.5px;top:3px;width:12px;height:12px;background:#fff;border:1px solid #b9c3cf"></div><div class="abs" style="left:28.5px;top:7px;width:4px;height:4px;background:#333"></div>
</div>
<div class="cell" style="left:478.1px;top:179.6px;width:64.5px;background:#e3ecfd">
<span class="g" style="left:auto;right:4px;transform-origin:100% 50%;color:#1a1a1a">21</span>
</div>
<div class="cell" style="left:542.6px;top:179.6px;width:58.5px;background:#dcfdbe">
<span class="g" style="color:#1a1a1a">Ano</span>
</div>
<div class="cell" style="left:26.1px;top:197.6px;width:85.0px;background:#b3f671">
<span class="g" style="transform:scaleX(.815);color:#1a1a1a">KONCB</span>
</div>
<div class="cell" style="left:111.1px;top:197.6px;width:275.5px;background:#b3f671">
<span class="g" style="color:#1a1a1a">Koncovky na bovdeny</span>
</div>
<div class="cell" style="left:386.6px;top:197.6px;width:30.5px;background:#b3f671">
<span class="g" style="color:#1a1a1a">ks</span>
</div>
<div class="cell" style="left:417.1px;top:197.6px;width:61.0px;background:#f8fbfe">
<div class="abs" style="left:24.5px;top:3px;width:12px;height:12px;background:#fff;border:1px solid #b9c3cf"></div><div class="abs" style="left:28.5px;top:7px;width:4px;height:4px;background:#333"></div>
</div>
<div class="cell" style="left:478.1px;top:197.6px;width:64.5px;background:#cfdcfc">
<span class="g" style="left:auto;right:4px;transform-origin:100% 50%;color:#1a1a1a">21</span>
</div>
<div class="cell" style="left:542.6px;top:197.6px;width:58.5px;background:#b3f671">
<span class="g" style="color:#1a1a1a">Ano</span>
</div>
<div class="cell" style="left:26.1px;top:215.6px;width:85.0px;background:#dcfdbe">
<span class="g" style="transform:scaleX(.815);color:#1a1a1a">BHAYZ</span>
</div>
<div class="cell" style="left:111.1px;top:215.6px;width:275.5px;background:#dcfdbe">
<span class="g" style="color:#1a1a1a">Brzda Hayes Sole XC kotoučová hydraulická (6&quot;) (zadní)</span>
</div>
<div class="cell" style="left:386.6px;top:215.6px;width:30.5px;background:#dcfdbe">
<span class="g" style="color:#1a1a1a">ks</span>
</div>
<div class="cell" style="left:417.1px;top:215.6px;width:61.0px;background:#ffffff">
<div class="abs" style="left:24.5px;top:3px;width:12px;height:12px;background:#fff;border:1px solid #b9c3cf"></div><div class="abs" style="left:28.5px;top:7px;width:4px;height:4px;background:#333"></div>
</div>
<div class="cell" style="left:478.1px;top:215.6px;width:64.5px;background:#e3ecfd">
<span class="g" style="left:auto;right:4px;transform-origin:100% 50%;color:#1a1a1a">21</span>
</div>
<div class="cell" style="left:542.6px;top:215.6px;width:58.5px;background:#dcfdbe">
<span class="g" style="color:#1a1a1a">Ano</span>
</div>
<div class="abs" style="left:601.1px;top:71.6px;width:15.5px;height:178px;background:#f1f5fa"></div>
<div class="abs" style="left:601.1px;top:87.6px;width:15.5px;height:60px;background:#dbe5f1"></div>
<div class="abs" style="left:601.1px;top:71.6px;width:15.5px;height:16px;background:#fff"></div>
<svg class="abs" style="left:603.6px;top:78.6px" width="11" height="8"><path d="M1.2 6.2l4.3-4.3l4.3 4.3" fill="none" stroke="#222" stroke-width="2.2"/></svg>
<svg class="abs" style="left:603.6px;top:236.6px" width="11" height="8"><path d="M1.2 1.5l4.3 4.3l4.3-4.3" fill="none" stroke="#222" stroke-width="2.2"/></svg>
<div class="abs" style="left:26.1px;top:249.6px;width:590.5px;height:16.5px;background:#f1f5fa"></div>
<div class="abs" style="left:26.1px;top:249.6px;width:17px;height:16.5px;background:#fff"></div>
<div class="abs" style="left:43.1px;top:249.6px;width:17px;height:16.5px;background:#dbe5f1"></div>
<svg class="abs" style="left:30.1px;top:252.35000000000002px" width="8" height="11"><path d="M6.2 1.2l-4.3 4.3l4.3 4.3" fill="none" stroke="#222" stroke-width="2.2"/></svg>
<svg class="abs" style="left:588.1px;top:252.35000000000002px" width="8" height="11"><path d="M1.5 1.2l4.3 4.3l-4.3 4.3" fill="none" stroke="#222" stroke-width="2.2"/></svg><div class="abs" style="left:26.100000000000023px;top:107.60000000000002px;width:85px;height:18px;border:1px solid #d8343a"></div><div class="btn" style="left:638.6px;top:56.60000000000002px">Detail zboží</div>
<div class="btn" style="left:638.6px;top:84.60000000000002px">Přílohy</div>
<div class="btn" style="left:638.6px;top:112.60000000000002px">Stav zásob</div>
<div class="btn" style="left:638.6px;top:140.60000000000002px">Použití náhr. dílu<span style="position:absolute;right:7px;top:6px;width:0;height:0;border-top:4.5px solid transparent;border-bottom:4.5px solid transparent;border-left:5px solid #fff"></span></div>
<div class="btn" style="left:638.6px;top:259.1px">Multivýběr zboží</div>
</div>
<div id="status" class="abs"></div>
</div></body></html>
